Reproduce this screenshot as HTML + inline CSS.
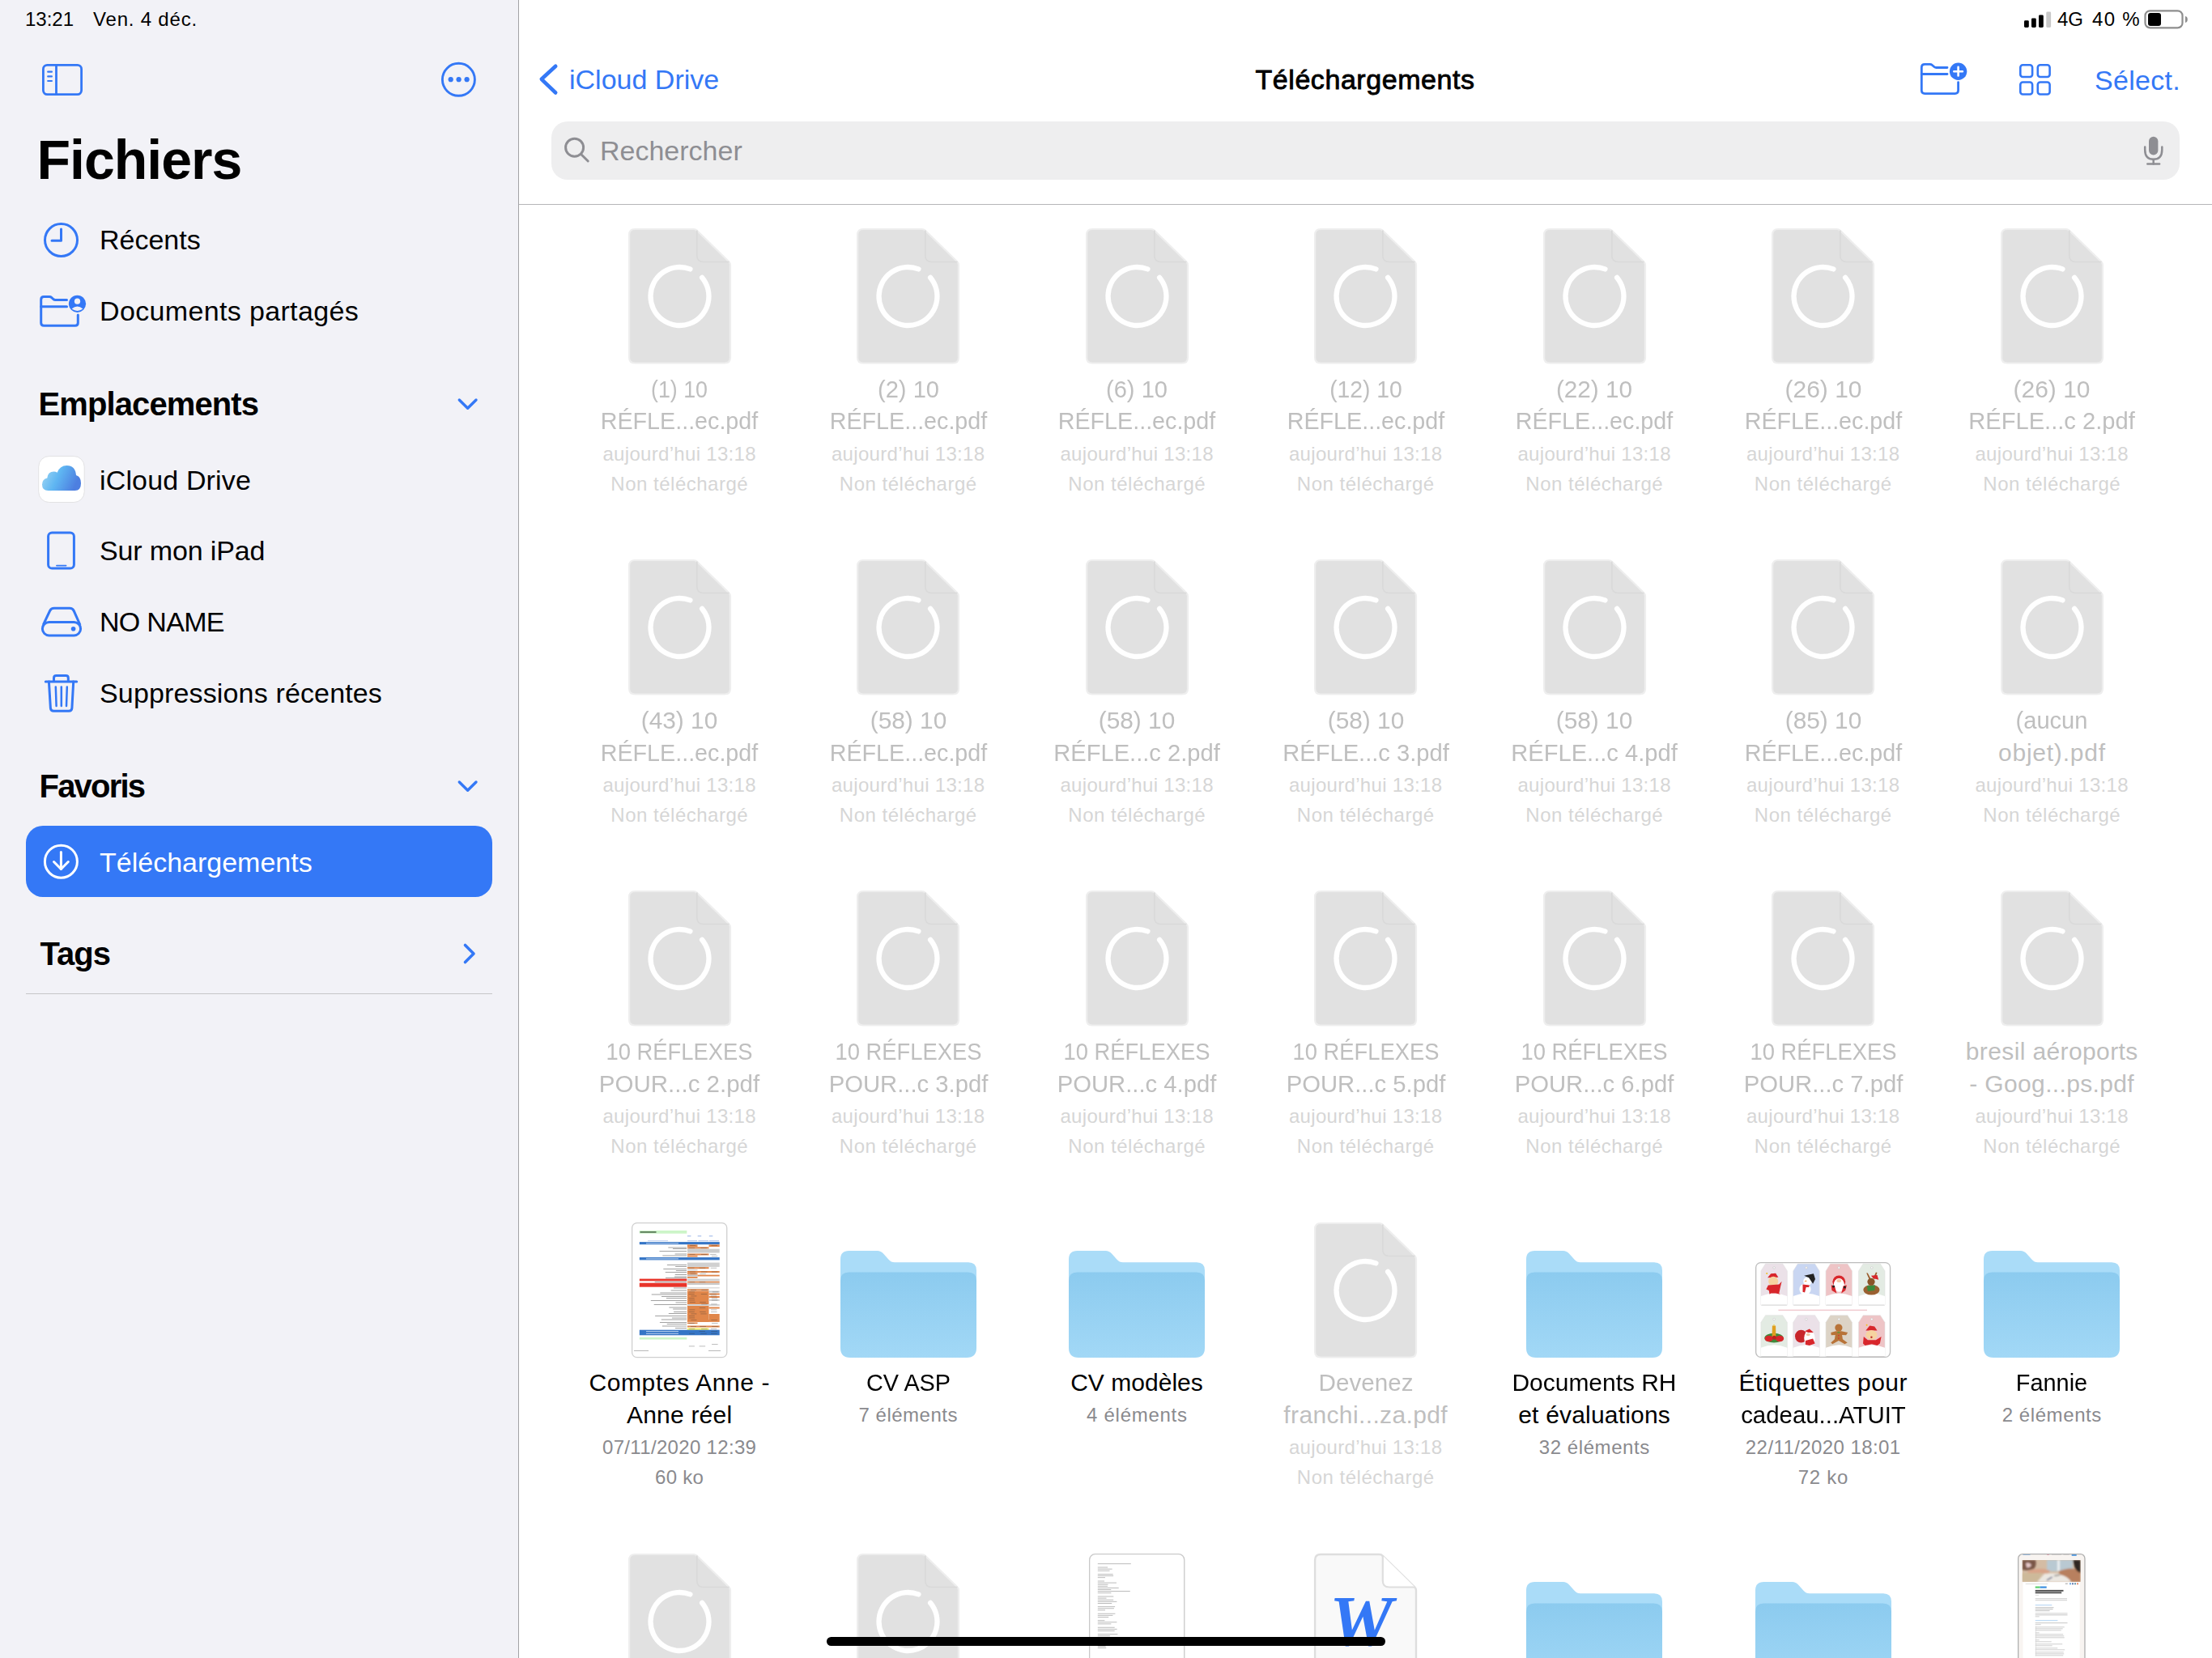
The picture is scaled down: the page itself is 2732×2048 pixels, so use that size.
<!DOCTYPE html><html><head><meta charset="utf-8"><style>
html,body{margin:0;padding:0;width:2732px;height:2048px;overflow:hidden;background:#fff;}
body{position:relative;font-family:"Liberation Sans",sans-serif;}
.t{position:absolute;white-space:nowrap;}
</style></head><body>
<div style="position:absolute;left:0;top:0;width:640px;height:2048px;background:#f2f2f7;"></div>
<div style="position:absolute;left:640px;top:0;width:1px;height:2048px;background:#a3a3a6;"></div>
<div style="position:absolute;left:641px;top:252px;width:2091px;height:1px;background:#b6b6b8;"></div>
<div class="t" style="left:31.00px;top:11.68px;font-size:24px;line-height:24px;color:#000;font-weight:400;">13:21</div>
<div class="t" style="left:115.00px;top:11.68px;font-size:24px;line-height:24px;color:#000;font-weight:400;letter-spacing:0.8px;">Ven. 4 déc.</div>
<svg style="position:absolute;left:2500px;top:14px;" width="34" height="20" viewBox="0 0 34 20"><rect x="0" y="11.2" width="5.8" height="8.8" rx="1.4" fill="#000"/><rect x="9" y="8.5" width="5.8" height="11.5" rx="1.4" fill="#000"/><rect x="18" y="4.5" width="5.8" height="15.5" rx="1.4" fill="#000"/><rect x="27.300000000000182" y="0.5" width="5.8" height="19.5" rx="1.4" fill="#c8c8c8"/></svg>
<div class="t" style="left:2541.00px;top:11.68px;font-size:24px;line-height:24px;color:#000;font-weight:400;">4G</div>
<div class="t" style="left:2584.00px;top:11.68px;font-size:24px;line-height:24px;color:#000;font-weight:400;letter-spacing:1.3px;">40 %</div>
<svg style="position:absolute;left:2648px;top:11px;" width="56" height="26" viewBox="0 0 56 26"><rect x="1.5" y="2.3" width="46" height="21.1" rx="6" fill="none" stroke="#8e8e8e" stroke-width="2.2"/><rect x="5" y="5" width="16" height="16" rx="3" fill="#000"/><path d="M51 9 Q53.8 9.6 53.8 13 Q53.8 16.4 51 17 Z" fill="#8e8e8e"/></svg>
<svg style="position:absolute;left:50px;top:77px;" width="56" height="44" viewBox="0 0 56 44"><g fill="none" stroke="#3478f6" stroke-width="2.8" stroke-linecap="round"><rect x="3.4" y="3.4" width="47.2" height="36.2" rx="5"/><line x1="19.5" y1="3.4" x2="19.5" y2="39.6"/><g stroke-width="2.2"><line x1="9.2" y1="11.7" x2="13.9" y2="11.7"/><line x1="9.2" y1="17.4" x2="13.9" y2="17.4"/><line x1="9.2" y1="23" x2="13.9" y2="23"/></g></g></svg>
<svg style="position:absolute;left:542px;top:74px;" width="50" height="50" viewBox="0 0 50 50"><circle cx="24.4" cy="24.3" r="20" fill="none" stroke="#3478f6" stroke-width="2.9"/><circle cx="14.7" cy="24.2" r="3.1" fill="#3478f6"/><circle cx="24.6" cy="24.2" r="3.1" fill="#3478f6"/><circle cx="34.6" cy="24.2" r="3.1" fill="#3478f6"/></svg>
<div class="t" style="left:45.50px;top:163.42px;font-size:68px;line-height:68px;color:#000;font-weight:700;letter-spacing:-1.0px;">Fichiers</div>
<svg style="position:absolute;left:50px;top:271px;" width="52" height="52" viewBox="0 0 52 52"><g fill="none" stroke="#3478f6" stroke-width="3" stroke-linecap="round" stroke-linejoin="round"><circle cx="25.5" cy="25.5" r="20"/><path d="M25.5 12 V26.3 H14"/></g></svg>
<div class="t" style="left:123.00px;top:279.21px;font-size:34px;line-height:34px;color:#000;font-weight:400;">Récents</div>
<svg style="position:absolute;left:46px;top:360px;" width="64" height="48" viewBox="0 0 64 48"><g fill="none" stroke="#3478f6" stroke-width="3" stroke-linecap="round" stroke-linejoin="round"><path d="M36.5 10.5 H22.5 Q21 10.5 19.8 9.5 L17.8 7.7 Q16.6 6.6 15 6.6 H8.2 Q4.7 6.6 4.7 10.2 V38.7 Q4.7 42.3 8.2 42.3 H46.8 Q50.3 42.3 50.3 38.7 V29"/><path d="M4.7 18.7 H36.5"/></g><circle cx="49.5" cy="15.3" r="10.6" fill="#3478f6"/><circle cx="49.5" cy="12.2" r="3.6" fill="#f2f2f7"/><path d="M42.6 21.6 Q49.5 15.5 56.4 21.6 Q49.5 26.5 42.6 21.6 Z" fill="#f2f2f7"/></svg>
<div class="t" style="left:123.00px;top:367.01px;font-size:34px;line-height:34px;color:#000;font-weight:400;letter-spacing:0.35px;">Documents partagés</div>
<div class="t" style="left:47.50px;top:478.53px;font-size:40px;line-height:40px;color:#000;font-weight:700;letter-spacing:-0.9px;">Emplacements</div>
<svg style="position:absolute;left:560px;top:486px;" width="36" height="26" viewBox="0 0 36 26"><path d="M7.3 8 L17.65 18.2 L28 8" fill="none" stroke="#3478f6" stroke-width="3.4" stroke-linecap="round" stroke-linejoin="round"/></svg>
<svg style="position:absolute;left:46px;top:562px;" width="60" height="60" viewBox="0 0 60 60"><defs><linearGradient id="cg" x1="0" y1="0" x2="1" y2="0.3"><stop offset="0" stop-color="#a6daf3"/><stop offset="0.5" stop-color="#5fb6f2"/><stop offset="1" stop-color="#4d7fe0"/></linearGradient></defs><rect x="1.7" y="1.5" width="56.5" height="57" rx="13" fill="#fff" stroke="#e2e2e4" stroke-width="1"/><path d="M13.5 44 Q6 44 6 36.5 Q6 30 12.3 28.6 Q13 20.5 20.5 20.5 Q23 20.5 24.6 21.7 Q28 13 36.5 13 Q47 13 48 25 Q54 26.5 54 35 Q54 44 46.5 44 Z" fill="url(#cg)"/></svg>
<div class="t" style="left:123.00px;top:575.91px;font-size:34px;line-height:34px;color:#000;font-weight:400;letter-spacing:0.15px;">iCloud Drive</div>
<svg style="position:absolute;left:56px;top:654px;" width="40" height="52" viewBox="0 0 40 52"><g fill="none" stroke="#3478f6" stroke-width="3" stroke-linecap="round"><rect x="3.6" y="3.9" width="31.8" height="44.2" rx="4.6"/><line x1="14" y1="44.6" x2="25.5" y2="44.6" stroke-width="1.9"/></g></svg>
<div class="t" style="left:123.00px;top:663.21px;font-size:34px;line-height:34px;color:#000;font-weight:400;letter-spacing:-0.15px;">Sur mon iPad</div>
<svg style="position:absolute;left:48px;top:746px;" width="58" height="44" viewBox="0 0 58 44"><g fill="none" stroke="#3478f6" stroke-width="3" stroke-linejoin="round"><path d="M5.3 26 L13.6 8.5 Q15.1 5.3 18.8 5.3 H38 Q41.7 5.3 43.2 8.5 L51 26"/><rect x="4.4" y="22.5" width="47.2" height="16.4" rx="8.2"/></g><circle cx="42.6" cy="30.7" r="2.8" fill="#3478f6"/></svg>
<div class="t" style="left:123.00px;top:751.21px;font-size:34px;line-height:34px;color:#000;font-weight:400;letter-spacing:-0.7px;">NO NAME</div>
<svg style="position:absolute;left:52px;top:830px;" width="48" height="52" viewBox="0 0 48 52"><g fill="none" stroke="#3478f6" stroke-width="3" stroke-linecap="round" stroke-linejoin="round"><path d="M4.3 12 H42.7"/><path d="M14.5 11.5 V7.5 Q14.5 4.6 17.6 4.6 H29.3 Q32.3 4.6 32.3 7.5 V11.5"/><path d="M8.4 12 L10.4 44.6 Q10.7 48.2 14.3 48.2 H33 Q36.6 48.2 36.9 44.6 L38.7 12"/><path d="M16.8 18.5 L17.6 42" stroke-width="2.5"/><path d="M23.8 18.5 V42" stroke-width="2.5"/><path d="M30.8 18.5 L30 42" stroke-width="2.5"/></g></svg>
<div class="t" style="left:123.00px;top:838.71px;font-size:34px;line-height:34px;color:#000;font-weight:400;letter-spacing:0.15px;">Suppressions récentes</div>
<div class="t" style="left:48.50px;top:951.33px;font-size:40px;line-height:40px;color:#000;font-weight:700;letter-spacing:-1.8px;">Favoris</div>
<svg style="position:absolute;left:560px;top:958px;" width="36" height="26" viewBox="0 0 36 26"><path d="M7.3 8 L17.65 18.2 L28 8" fill="none" stroke="#3478f6" stroke-width="3.4" stroke-linecap="round" stroke-linejoin="round"/></svg>
<div style="position:absolute;left:32px;top:1020px;width:576px;height:88px;border-radius:21px;background:#3478f6;"></div>
<svg style="position:absolute;left:50px;top:1039px;" width="52" height="52" viewBox="0 0 52 52"><g fill="none" stroke="#fff" stroke-width="3" stroke-linecap="round" stroke-linejoin="round"><circle cx="25.4" cy="25.2" r="20"/><path d="M25.4 13.5 V34.5"/><path d="M16.5 25.5 L25.4 34.5 L34.3 25.5"/></g></svg>
<div class="t" style="left:123.00px;top:1047.51px;font-size:34px;line-height:34px;color:#fff;font-weight:400;">Téléchargements</div>
<div class="t" style="left:49.50px;top:1157.83px;font-size:40px;line-height:40px;color:#000;font-weight:700;letter-spacing:-1.0px;">Tags</div>
<svg style="position:absolute;left:566px;top:1160px;" width="28" height="36" viewBox="0 0 28 36"><path d="M8.5 7.5 L19 18 L8.5 28.5" fill="none" stroke="#3478f6" stroke-width="3.6" stroke-linecap="round" stroke-linejoin="round"/></svg>
<div style="position:absolute;left:32px;top:1227px;width:576px;height:1px;background:#c6c6c8;"></div>
<svg style="position:absolute;left:660px;top:76px;" width="34" height="46" viewBox="0 0 34 46"><path d="M26.2 5.7 L8.8 21.8 L26.2 38.5" fill="none" stroke="#3478f6" stroke-width="4.6" stroke-linecap="round" stroke-linejoin="round"/></svg>
<div class="t" style="left:703.00px;top:81.21px;font-size:34px;line-height:34px;color:#3478f6;font-weight:400;">iCloud Drive</div>
<div class="t" style="left:1386.00px;width:600px;text-align:center;top:81.41px;font-size:34px;line-height:34px;color:#000;font-weight:400;letter-spacing:0.55px;-webkit-text-stroke:0.85px #000;">Téléchargements</div>
<svg style="position:absolute;left:2368px;top:72px;" width="64" height="50" viewBox="0 0 64 50"><g fill="none" stroke="#3478f6" stroke-width="2.8" stroke-linecap="round" stroke-linejoin="round"><path d="M37 11.5 H23.5 Q22 11.5 20.8 10.5 L18.5 8.5 Q17.3 7.4 15.5 7.4 H9.3 Q5.3 7.4 5.3 11.4 V39.6 Q5.3 43.6 9.3 43.6 H46.6 Q50.6 43.6 50.6 39.6 V29.6"/><path d="M5.3 19.5 H37"/></g><circle cx="50.6" cy="16.2" r="10.7" fill="#3478f6"/><path d="M50.6 10.9 V21.5 M45.3 16.2 H55.9" stroke="#fff" stroke-width="2.6" stroke-linecap="round"/></svg>
<svg style="position:absolute;left:2490px;top:75px;" width="48" height="48" viewBox="0 0 48 48"><g fill="none" stroke="#3478f6" stroke-width="2.6"><rect x="5.3" y="5.3" width="14.8" height="14.7" rx="3"/><rect x="26.8" y="5.3" width="14.8" height="14.7" rx="3"/><rect x="5.3" y="26.5" width="14.8" height="15" rx="3"/><rect x="26.8" y="26.5" width="14.8" height="15" rx="3"/></g></svg>
<div class="t" style="left:2587.00px;top:81.81px;font-size:34px;line-height:34px;color:#3478f6;font-weight:400;letter-spacing:0.3px;">Sélect.</div>
<div style="position:absolute;left:681px;top:150px;width:2011px;height:72px;border-radius:20px;background:#eeeeef;"></div>
<svg style="position:absolute;left:692px;top:164px;" width="40" height="42" viewBox="0 0 40 42"><g fill="none" stroke="#8e8e93" stroke-width="3" stroke-linecap="round"><circle cx="17.6" cy="18.2" r="11"/><path d="M25.6 26.5 L34.2 35"/></g></svg>
<div class="t" style="left:741.00px;top:169.21px;font-size:34px;line-height:34px;color:#8e8e93;font-weight:400;">Rechercher</div>
<svg style="position:absolute;left:2644px;top:164px;" width="32" height="44" viewBox="0 0 32 44"><rect x="10" y="4.8" width="11.4" height="22.7" rx="5.7" fill="#8e8e93"/><g fill="none" stroke="#8e8e93" stroke-width="2.5" stroke-linecap="round"><path d="M5.2 17.5 V21 Q5.2 32.8 15.7 32.8 Q26.3 32.8 26.3 21 V17.5"/><path d="M15.7 33 V38.5"/><path d="M8.3 38.6 H23.1"/></g></svg>
<svg style="position:absolute;left:773.5px;top:280.0px;" width="131" height="172" viewBox="0 0 131 172"><path d="M10.3 3 H82.5 Q85 3 86.8 4.8 L126.2 43.3 Q128 45.1 128 47.6 V161.5 Q128 168.5 121 168.5 H10.1 Q3.1 168.5 3.1 161.5 V10 Q3.1 3 10.3 3 Z" fill="#e1e1e1" stroke="#eeeeee" stroke-width="2.2"/><path d="M86.8 4.5 V35.5 Q86.8 43.5 94.8 43.5 H126.5" fill="none" stroke="#d9d9d9" stroke-width="1.6"/><path d="M93.08 62.86 A 36 36 0 1 1 78.40 52.39" fill="none" stroke="#fff" stroke-width="6.3" stroke-linecap="round"/></svg>
<div class="t" style="left:689.00px;width:300px;text-align:center;top:465.60px;font-size:30px;line-height:30px;color:#bfbfbf;font-weight:400;transform:scaleX(0.8923);transform-origin:50% 50%;">(1) 10</div>
<div class="t" style="left:689.00px;width:300px;text-align:center;top:505.40px;font-size:30px;line-height:30px;color:#bfbfbf;font-weight:400;transform:scaleX(0.9559);transform-origin:50% 50%;">RÉFLE...ec.pdf</div>
<div class="t" style="left:689.16px;width:300px;text-align:center;top:548.58px;font-size:24px;line-height:24px;color:#d6d6d6;font-weight:400;letter-spacing:0.312px;">aujourd’hui 13:18</div>
<div class="t" style="left:689.25px;width:300px;text-align:center;top:585.68px;font-size:24px;line-height:24px;color:#d6d6d6;font-weight:400;letter-spacing:0.508px;">Non téléchargé</div>
<svg style="position:absolute;left:1056.0px;top:280.0px;" width="131" height="172" viewBox="0 0 131 172"><path d="M10.3 3 H82.5 Q85 3 86.8 4.8 L126.2 43.3 Q128 45.1 128 47.6 V161.5 Q128 168.5 121 168.5 H10.1 Q3.1 168.5 3.1 161.5 V10 Q3.1 3 10.3 3 Z" fill="#e1e1e1" stroke="#eeeeee" stroke-width="2.2"/><path d="M86.8 4.5 V35.5 Q86.8 43.5 94.8 43.5 H126.5" fill="none" stroke="#d9d9d9" stroke-width="1.6"/><path d="M93.08 62.86 A 36 36 0 1 1 78.40 52.39" fill="none" stroke="#fff" stroke-width="6.3" stroke-linecap="round"/></svg>
<div class="t" style="left:971.50px;width:300px;text-align:center;top:465.60px;font-size:30px;line-height:30px;color:#bfbfbf;font-weight:400;transform:scaleX(0.9692);transform-origin:50% 50%;">(2) 10</div>
<div class="t" style="left:971.50px;width:300px;text-align:center;top:505.40px;font-size:30px;line-height:30px;color:#bfbfbf;font-weight:400;transform:scaleX(0.9559);transform-origin:50% 50%;">RÉFLE...ec.pdf</div>
<div class="t" style="left:971.66px;width:300px;text-align:center;top:548.58px;font-size:24px;line-height:24px;color:#d6d6d6;font-weight:400;letter-spacing:0.312px;">aujourd’hui 13:18</div>
<div class="t" style="left:971.75px;width:300px;text-align:center;top:585.68px;font-size:24px;line-height:24px;color:#d6d6d6;font-weight:400;letter-spacing:0.508px;">Non téléchargé</div>
<svg style="position:absolute;left:1338.5px;top:280.0px;" width="131" height="172" viewBox="0 0 131 172"><path d="M10.3 3 H82.5 Q85 3 86.8 4.8 L126.2 43.3 Q128 45.1 128 47.6 V161.5 Q128 168.5 121 168.5 H10.1 Q3.1 168.5 3.1 161.5 V10 Q3.1 3 10.3 3 Z" fill="#e1e1e1" stroke="#eeeeee" stroke-width="2.2"/><path d="M86.8 4.5 V35.5 Q86.8 43.5 94.8 43.5 H126.5" fill="none" stroke="#d9d9d9" stroke-width="1.6"/><path d="M93.08 62.86 A 36 36 0 1 1 78.40 52.39" fill="none" stroke="#fff" stroke-width="6.3" stroke-linecap="round"/></svg>
<div class="t" style="left:1254.00px;width:300px;text-align:center;top:465.60px;font-size:30px;line-height:30px;color:#bfbfbf;font-weight:400;transform:scaleX(0.9692);transform-origin:50% 50%;">(6) 10</div>
<div class="t" style="left:1254.00px;width:300px;text-align:center;top:505.40px;font-size:30px;line-height:30px;color:#bfbfbf;font-weight:400;transform:scaleX(0.9559);transform-origin:50% 50%;">RÉFLE...ec.pdf</div>
<div class="t" style="left:1254.16px;width:300px;text-align:center;top:548.58px;font-size:24px;line-height:24px;color:#d6d6d6;font-weight:400;letter-spacing:0.312px;">aujourd’hui 13:18</div>
<div class="t" style="left:1254.25px;width:300px;text-align:center;top:585.68px;font-size:24px;line-height:24px;color:#d6d6d6;font-weight:400;letter-spacing:0.508px;">Non téléchargé</div>
<svg style="position:absolute;left:1621.0px;top:280.0px;" width="131" height="172" viewBox="0 0 131 172"><path d="M10.3 3 H82.5 Q85 3 86.8 4.8 L126.2 43.3 Q128 45.1 128 47.6 V161.5 Q128 168.5 121 168.5 H10.1 Q3.1 168.5 3.1 161.5 V10 Q3.1 3 10.3 3 Z" fill="#e1e1e1" stroke="#eeeeee" stroke-width="2.2"/><path d="M86.8 4.5 V35.5 Q86.8 43.5 94.8 43.5 H126.5" fill="none" stroke="#d9d9d9" stroke-width="1.6"/><path d="M93.08 62.86 A 36 36 0 1 1 78.40 52.39" fill="none" stroke="#fff" stroke-width="6.3" stroke-linecap="round"/></svg>
<div class="t" style="left:1536.50px;width:300px;text-align:center;top:465.60px;font-size:30px;line-height:30px;color:#bfbfbf;font-weight:400;transform:scaleX(0.9432);transform-origin:50% 50%;">(12) 10</div>
<div class="t" style="left:1536.50px;width:300px;text-align:center;top:505.40px;font-size:30px;line-height:30px;color:#bfbfbf;font-weight:400;transform:scaleX(0.9559);transform-origin:50% 50%;">RÉFLE...ec.pdf</div>
<div class="t" style="left:1536.66px;width:300px;text-align:center;top:548.58px;font-size:24px;line-height:24px;color:#d6d6d6;font-weight:400;letter-spacing:0.312px;">aujourd’hui 13:18</div>
<div class="t" style="left:1536.75px;width:300px;text-align:center;top:585.68px;font-size:24px;line-height:24px;color:#d6d6d6;font-weight:400;letter-spacing:0.508px;">Non téléchargé</div>
<svg style="position:absolute;left:1903.5px;top:280.0px;" width="131" height="172" viewBox="0 0 131 172"><path d="M10.3 3 H82.5 Q85 3 86.8 4.8 L126.2 43.3 Q128 45.1 128 47.6 V161.5 Q128 168.5 121 168.5 H10.1 Q3.1 168.5 3.1 161.5 V10 Q3.1 3 10.3 3 Z" fill="#e1e1e1" stroke="#eeeeee" stroke-width="2.2"/><path d="M86.8 4.5 V35.5 Q86.8 43.5 94.8 43.5 H126.5" fill="none" stroke="#d9d9d9" stroke-width="1.6"/><path d="M93.08 62.86 A 36 36 0 1 1 78.40 52.39" fill="none" stroke="#fff" stroke-width="6.3" stroke-linecap="round"/></svg>
<div class="t" style="left:1819.00px;width:300px;text-align:center;top:465.60px;font-size:30px;line-height:30px;color:#bfbfbf;font-weight:400;transform:scaleX(0.9895);transform-origin:50% 50%;">(22) 10</div>
<div class="t" style="left:1819.00px;width:300px;text-align:center;top:505.40px;font-size:30px;line-height:30px;color:#bfbfbf;font-weight:400;transform:scaleX(0.9559);transform-origin:50% 50%;">RÉFLE...ec.pdf</div>
<div class="t" style="left:1819.16px;width:300px;text-align:center;top:548.58px;font-size:24px;line-height:24px;color:#d6d6d6;font-weight:400;letter-spacing:0.312px;">aujourd’hui 13:18</div>
<div class="t" style="left:1819.25px;width:300px;text-align:center;top:585.68px;font-size:24px;line-height:24px;color:#d6d6d6;font-weight:400;letter-spacing:0.508px;">Non téléchargé</div>
<svg style="position:absolute;left:2186.0px;top:280.0px;" width="131" height="172" viewBox="0 0 131 172"><path d="M10.3 3 H82.5 Q85 3 86.8 4.8 L126.2 43.3 Q128 45.1 128 47.6 V161.5 Q128 168.5 121 168.5 H10.1 Q3.1 168.5 3.1 161.5 V10 Q3.1 3 10.3 3 Z" fill="#e1e1e1" stroke="#eeeeee" stroke-width="2.2"/><path d="M86.8 4.5 V35.5 Q86.8 43.5 94.8 43.5 H126.5" fill="none" stroke="#d9d9d9" stroke-width="1.6"/><path d="M93.08 62.86 A 36 36 0 1 1 78.40 52.39" fill="none" stroke="#fff" stroke-width="6.3" stroke-linecap="round"/></svg>
<div class="t" style="left:2101.50px;width:300px;text-align:center;top:465.60px;font-size:30px;line-height:30px;color:#bfbfbf;font-weight:400;transform:scaleX(0.9989);transform-origin:50% 50%;">(26) 10</div>
<div class="t" style="left:2101.50px;width:300px;text-align:center;top:505.40px;font-size:30px;line-height:30px;color:#bfbfbf;font-weight:400;transform:scaleX(0.9559);transform-origin:50% 50%;">RÉFLE...ec.pdf</div>
<div class="t" style="left:2101.66px;width:300px;text-align:center;top:548.58px;font-size:24px;line-height:24px;color:#d6d6d6;font-weight:400;letter-spacing:0.312px;">aujourd’hui 13:18</div>
<div class="t" style="left:2101.75px;width:300px;text-align:center;top:585.68px;font-size:24px;line-height:24px;color:#d6d6d6;font-weight:400;letter-spacing:0.508px;">Non téléchargé</div>
<svg style="position:absolute;left:2468.5px;top:280.0px;" width="131" height="172" viewBox="0 0 131 172"><path d="M10.3 3 H82.5 Q85 3 86.8 4.8 L126.2 43.3 Q128 45.1 128 47.6 V161.5 Q128 168.5 121 168.5 H10.1 Q3.1 168.5 3.1 161.5 V10 Q3.1 3 10.3 3 Z" fill="#e1e1e1" stroke="#eeeeee" stroke-width="2.2"/><path d="M86.8 4.5 V35.5 Q86.8 43.5 94.8 43.5 H126.5" fill="none" stroke="#d9d9d9" stroke-width="1.6"/><path d="M93.08 62.86 A 36 36 0 1 1 78.40 52.39" fill="none" stroke="#fff" stroke-width="6.3" stroke-linecap="round"/></svg>
<div class="t" style="left:2384.00px;width:300px;text-align:center;top:465.60px;font-size:30px;line-height:30px;color:#bfbfbf;font-weight:400;transform:scaleX(0.9989);transform-origin:50% 50%;">(26) 10</div>
<div class="t" style="left:2384.00px;width:300px;text-align:center;top:505.40px;font-size:30px;line-height:30px;color:#bfbfbf;font-weight:400;transform:scaleX(0.9710);transform-origin:50% 50%;">RÉFLE...c 2.pdf</div>
<div class="t" style="left:2384.16px;width:300px;text-align:center;top:548.58px;font-size:24px;line-height:24px;color:#d6d6d6;font-weight:400;letter-spacing:0.312px;">aujourd’hui 13:18</div>
<div class="t" style="left:2384.25px;width:300px;text-align:center;top:585.68px;font-size:24px;line-height:24px;color:#d6d6d6;font-weight:400;letter-spacing:0.508px;">Non téléchargé</div>
<svg style="position:absolute;left:773.5px;top:689.2px;" width="131" height="172" viewBox="0 0 131 172"><path d="M10.3 3 H82.5 Q85 3 86.8 4.8 L126.2 43.3 Q128 45.1 128 47.6 V161.5 Q128 168.5 121 168.5 H10.1 Q3.1 168.5 3.1 161.5 V10 Q3.1 3 10.3 3 Z" fill="#e1e1e1" stroke="#eeeeee" stroke-width="2.2"/><path d="M86.8 4.5 V35.5 Q86.8 43.5 94.8 43.5 H126.5" fill="none" stroke="#d9d9d9" stroke-width="1.6"/><path d="M93.08 62.86 A 36 36 0 1 1 78.40 52.39" fill="none" stroke="#fff" stroke-width="6.3" stroke-linecap="round"/></svg>
<div class="t" style="left:689.00px;width:300px;text-align:center;top:874.80px;font-size:30px;line-height:30px;color:#bfbfbf;font-weight:400;transform:scaleX(0.9947);transform-origin:50% 50%;">(43) 10</div>
<div class="t" style="left:689.00px;width:300px;text-align:center;top:914.60px;font-size:30px;line-height:30px;color:#bfbfbf;font-weight:400;transform:scaleX(0.9559);transform-origin:50% 50%;">RÉFLE...ec.pdf</div>
<div class="t" style="left:689.16px;width:300px;text-align:center;top:957.78px;font-size:24px;line-height:24px;color:#d6d6d6;font-weight:400;letter-spacing:0.312px;">aujourd’hui 13:18</div>
<div class="t" style="left:689.25px;width:300px;text-align:center;top:994.88px;font-size:24px;line-height:24px;color:#d6d6d6;font-weight:400;letter-spacing:0.508px;">Non téléchargé</div>
<svg style="position:absolute;left:1056.0px;top:689.2px;" width="131" height="172" viewBox="0 0 131 172"><path d="M10.3 3 H82.5 Q85 3 86.8 4.8 L126.2 43.3 Q128 45.1 128 47.6 V161.5 Q128 168.5 121 168.5 H10.1 Q3.1 168.5 3.1 161.5 V10 Q3.1 3 10.3 3 Z" fill="#e1e1e1" stroke="#eeeeee" stroke-width="2.2"/><path d="M86.8 4.5 V35.5 Q86.8 43.5 94.8 43.5 H126.5" fill="none" stroke="#d9d9d9" stroke-width="1.6"/><path d="M93.08 62.86 A 36 36 0 1 1 78.40 52.39" fill="none" stroke="#fff" stroke-width="6.3" stroke-linecap="round"/></svg>
<div class="t" style="left:971.50px;width:300px;text-align:center;top:874.80px;font-size:30px;line-height:30px;color:#bfbfbf;font-weight:400;transform:scaleX(0.9937);transform-origin:50% 50%;">(58) 10</div>
<div class="t" style="left:971.50px;width:300px;text-align:center;top:914.60px;font-size:30px;line-height:30px;color:#bfbfbf;font-weight:400;transform:scaleX(0.9559);transform-origin:50% 50%;">RÉFLE...ec.pdf</div>
<div class="t" style="left:971.66px;width:300px;text-align:center;top:957.78px;font-size:24px;line-height:24px;color:#d6d6d6;font-weight:400;letter-spacing:0.312px;">aujourd’hui 13:18</div>
<div class="t" style="left:971.75px;width:300px;text-align:center;top:994.88px;font-size:24px;line-height:24px;color:#d6d6d6;font-weight:400;letter-spacing:0.508px;">Non téléchargé</div>
<svg style="position:absolute;left:1338.5px;top:689.2px;" width="131" height="172" viewBox="0 0 131 172"><path d="M10.3 3 H82.5 Q85 3 86.8 4.8 L126.2 43.3 Q128 45.1 128 47.6 V161.5 Q128 168.5 121 168.5 H10.1 Q3.1 168.5 3.1 161.5 V10 Q3.1 3 10.3 3 Z" fill="#e1e1e1" stroke="#eeeeee" stroke-width="2.2"/><path d="M86.8 4.5 V35.5 Q86.8 43.5 94.8 43.5 H126.5" fill="none" stroke="#d9d9d9" stroke-width="1.6"/><path d="M93.08 62.86 A 36 36 0 1 1 78.40 52.39" fill="none" stroke="#fff" stroke-width="6.3" stroke-linecap="round"/></svg>
<div class="t" style="left:1254.00px;width:300px;text-align:center;top:874.80px;font-size:30px;line-height:30px;color:#bfbfbf;font-weight:400;transform:scaleX(0.9937);transform-origin:50% 50%;">(58) 10</div>
<div class="t" style="left:1254.00px;width:300px;text-align:center;top:914.60px;font-size:30px;line-height:30px;color:#bfbfbf;font-weight:400;transform:scaleX(0.9710);transform-origin:50% 50%;">RÉFLE...c 2.pdf</div>
<div class="t" style="left:1254.16px;width:300px;text-align:center;top:957.78px;font-size:24px;line-height:24px;color:#d6d6d6;font-weight:400;letter-spacing:0.312px;">aujourd’hui 13:18</div>
<div class="t" style="left:1254.25px;width:300px;text-align:center;top:994.88px;font-size:24px;line-height:24px;color:#d6d6d6;font-weight:400;letter-spacing:0.508px;">Non téléchargé</div>
<svg style="position:absolute;left:1621.0px;top:689.2px;" width="131" height="172" viewBox="0 0 131 172"><path d="M10.3 3 H82.5 Q85 3 86.8 4.8 L126.2 43.3 Q128 45.1 128 47.6 V161.5 Q128 168.5 121 168.5 H10.1 Q3.1 168.5 3.1 161.5 V10 Q3.1 3 10.3 3 Z" fill="#e1e1e1" stroke="#eeeeee" stroke-width="2.2"/><path d="M86.8 4.5 V35.5 Q86.8 43.5 94.8 43.5 H126.5" fill="none" stroke="#d9d9d9" stroke-width="1.6"/><path d="M93.08 62.86 A 36 36 0 1 1 78.40 52.39" fill="none" stroke="#fff" stroke-width="6.3" stroke-linecap="round"/></svg>
<div class="t" style="left:1536.50px;width:300px;text-align:center;top:874.80px;font-size:30px;line-height:30px;color:#bfbfbf;font-weight:400;transform:scaleX(0.9937);transform-origin:50% 50%;">(58) 10</div>
<div class="t" style="left:1536.50px;width:300px;text-align:center;top:914.60px;font-size:30px;line-height:30px;color:#bfbfbf;font-weight:400;transform:scaleX(0.9710);transform-origin:50% 50%;">RÉFLE...c 3.pdf</div>
<div class="t" style="left:1536.66px;width:300px;text-align:center;top:957.78px;font-size:24px;line-height:24px;color:#d6d6d6;font-weight:400;letter-spacing:0.312px;">aujourd’hui 13:18</div>
<div class="t" style="left:1536.75px;width:300px;text-align:center;top:994.88px;font-size:24px;line-height:24px;color:#d6d6d6;font-weight:400;letter-spacing:0.508px;">Non téléchargé</div>
<svg style="position:absolute;left:1903.5px;top:689.2px;" width="131" height="172" viewBox="0 0 131 172"><path d="M10.3 3 H82.5 Q85 3 86.8 4.8 L126.2 43.3 Q128 45.1 128 47.6 V161.5 Q128 168.5 121 168.5 H10.1 Q3.1 168.5 3.1 161.5 V10 Q3.1 3 10.3 3 Z" fill="#e1e1e1" stroke="#eeeeee" stroke-width="2.2"/><path d="M86.8 4.5 V35.5 Q86.8 43.5 94.8 43.5 H126.5" fill="none" stroke="#d9d9d9" stroke-width="1.6"/><path d="M93.08 62.86 A 36 36 0 1 1 78.40 52.39" fill="none" stroke="#fff" stroke-width="6.3" stroke-linecap="round"/></svg>
<div class="t" style="left:1819.00px;width:300px;text-align:center;top:874.80px;font-size:30px;line-height:30px;color:#bfbfbf;font-weight:400;transform:scaleX(0.9937);transform-origin:50% 50%;">(58) 10</div>
<div class="t" style="left:1819.00px;width:300px;text-align:center;top:914.60px;font-size:30px;line-height:30px;color:#bfbfbf;font-weight:400;transform:scaleX(0.9710);transform-origin:50% 50%;">RÉFLE...c 4.pdf</div>
<div class="t" style="left:1819.16px;width:300px;text-align:center;top:957.78px;font-size:24px;line-height:24px;color:#d6d6d6;font-weight:400;letter-spacing:0.312px;">aujourd’hui 13:18</div>
<div class="t" style="left:1819.25px;width:300px;text-align:center;top:994.88px;font-size:24px;line-height:24px;color:#d6d6d6;font-weight:400;letter-spacing:0.508px;">Non téléchargé</div>
<svg style="position:absolute;left:2186.0px;top:689.2px;" width="131" height="172" viewBox="0 0 131 172"><path d="M10.3 3 H82.5 Q85 3 86.8 4.8 L126.2 43.3 Q128 45.1 128 47.6 V161.5 Q128 168.5 121 168.5 H10.1 Q3.1 168.5 3.1 161.5 V10 Q3.1 3 10.3 3 Z" fill="#e1e1e1" stroke="#eeeeee" stroke-width="2.2"/><path d="M86.8 4.5 V35.5 Q86.8 43.5 94.8 43.5 H126.5" fill="none" stroke="#d9d9d9" stroke-width="1.6"/><path d="M93.08 62.86 A 36 36 0 1 1 78.40 52.39" fill="none" stroke="#fff" stroke-width="6.3" stroke-linecap="round"/></svg>
<div class="t" style="left:2101.50px;width:300px;text-align:center;top:874.80px;font-size:30px;line-height:30px;color:#bfbfbf;font-weight:400;transform:scaleX(0.9937);transform-origin:50% 50%;">(85) 10</div>
<div class="t" style="left:2101.50px;width:300px;text-align:center;top:914.60px;font-size:30px;line-height:30px;color:#bfbfbf;font-weight:400;transform:scaleX(0.9559);transform-origin:50% 50%;">RÉFLE...ec.pdf</div>
<div class="t" style="left:2101.66px;width:300px;text-align:center;top:957.78px;font-size:24px;line-height:24px;color:#d6d6d6;font-weight:400;letter-spacing:0.312px;">aujourd’hui 13:18</div>
<div class="t" style="left:2101.75px;width:300px;text-align:center;top:994.88px;font-size:24px;line-height:24px;color:#d6d6d6;font-weight:400;letter-spacing:0.508px;">Non téléchargé</div>
<svg style="position:absolute;left:2468.5px;top:689.2px;" width="131" height="172" viewBox="0 0 131 172"><path d="M10.3 3 H82.5 Q85 3 86.8 4.8 L126.2 43.3 Q128 45.1 128 47.6 V161.5 Q128 168.5 121 168.5 H10.1 Q3.1 168.5 3.1 161.5 V10 Q3.1 3 10.3 3 Z" fill="#e1e1e1" stroke="#eeeeee" stroke-width="2.2"/><path d="M86.8 4.5 V35.5 Q86.8 43.5 94.8 43.5 H126.5" fill="none" stroke="#d9d9d9" stroke-width="1.6"/><path d="M93.08 62.86 A 36 36 0 1 1 78.40 52.39" fill="none" stroke="#fff" stroke-width="6.3" stroke-linecap="round"/></svg>
<div class="t" style="left:2384.00px;width:300px;text-align:center;top:874.80px;font-size:30px;line-height:30px;color:#bfbfbf;font-weight:400;transform:scaleX(0.9696);transform-origin:50% 50%;">(aucun</div>
<div class="t" style="left:2384.38px;width:300px;text-align:center;top:914.60px;font-size:30px;line-height:30px;color:#bfbfbf;font-weight:400;letter-spacing:0.767px;">objet).pdf</div>
<div class="t" style="left:2384.16px;width:300px;text-align:center;top:957.78px;font-size:24px;line-height:24px;color:#d6d6d6;font-weight:400;letter-spacing:0.312px;">aujourd’hui 13:18</div>
<div class="t" style="left:2384.25px;width:300px;text-align:center;top:994.88px;font-size:24px;line-height:24px;color:#d6d6d6;font-weight:400;letter-spacing:0.508px;">Non téléchargé</div>
<svg style="position:absolute;left:773.5px;top:1098.4px;" width="131" height="172" viewBox="0 0 131 172"><path d="M10.3 3 H82.5 Q85 3 86.8 4.8 L126.2 43.3 Q128 45.1 128 47.6 V161.5 Q128 168.5 121 168.5 H10.1 Q3.1 168.5 3.1 161.5 V10 Q3.1 3 10.3 3 Z" fill="#e1e1e1" stroke="#eeeeee" stroke-width="2.2"/><path d="M86.8 4.5 V35.5 Q86.8 43.5 94.8 43.5 H126.5" fill="none" stroke="#d9d9d9" stroke-width="1.6"/><path d="M93.08 62.86 A 36 36 0 1 1 78.40 52.39" fill="none" stroke="#fff" stroke-width="6.3" stroke-linecap="round"/></svg>
<div class="t" style="left:689.00px;width:300px;text-align:center;top:1284.00px;font-size:30px;line-height:30px;color:#bfbfbf;font-weight:400;transform:scaleX(0.9111);transform-origin:50% 50%;">10 RÉFLEXES</div>
<div class="t" style="left:689.00px;width:300px;text-align:center;top:1323.80px;font-size:30px;line-height:30px;color:#bfbfbf;font-weight:400;transform:scaleX(0.9837);transform-origin:50% 50%;">POUR...c 2.pdf</div>
<div class="t" style="left:689.16px;width:300px;text-align:center;top:1366.98px;font-size:24px;line-height:24px;color:#d6d6d6;font-weight:400;letter-spacing:0.312px;">aujourd’hui 13:18</div>
<div class="t" style="left:689.25px;width:300px;text-align:center;top:1404.08px;font-size:24px;line-height:24px;color:#d6d6d6;font-weight:400;letter-spacing:0.508px;">Non téléchargé</div>
<svg style="position:absolute;left:1056.0px;top:1098.4px;" width="131" height="172" viewBox="0 0 131 172"><path d="M10.3 3 H82.5 Q85 3 86.8 4.8 L126.2 43.3 Q128 45.1 128 47.6 V161.5 Q128 168.5 121 168.5 H10.1 Q3.1 168.5 3.1 161.5 V10 Q3.1 3 10.3 3 Z" fill="#e1e1e1" stroke="#eeeeee" stroke-width="2.2"/><path d="M86.8 4.5 V35.5 Q86.8 43.5 94.8 43.5 H126.5" fill="none" stroke="#d9d9d9" stroke-width="1.6"/><path d="M93.08 62.86 A 36 36 0 1 1 78.40 52.39" fill="none" stroke="#fff" stroke-width="6.3" stroke-linecap="round"/></svg>
<div class="t" style="left:971.50px;width:300px;text-align:center;top:1284.00px;font-size:30px;line-height:30px;color:#bfbfbf;font-weight:400;transform:scaleX(0.9111);transform-origin:50% 50%;">10 RÉFLEXES</div>
<div class="t" style="left:971.50px;width:300px;text-align:center;top:1323.80px;font-size:30px;line-height:30px;color:#bfbfbf;font-weight:400;transform:scaleX(0.9742);transform-origin:50% 50%;">POUR...c 3.pdf</div>
<div class="t" style="left:971.66px;width:300px;text-align:center;top:1366.98px;font-size:24px;line-height:24px;color:#d6d6d6;font-weight:400;letter-spacing:0.312px;">aujourd’hui 13:18</div>
<div class="t" style="left:971.75px;width:300px;text-align:center;top:1404.08px;font-size:24px;line-height:24px;color:#d6d6d6;font-weight:400;letter-spacing:0.508px;">Non téléchargé</div>
<svg style="position:absolute;left:1338.5px;top:1098.4px;" width="131" height="172" viewBox="0 0 131 172"><path d="M10.3 3 H82.5 Q85 3 86.8 4.8 L126.2 43.3 Q128 45.1 128 47.6 V161.5 Q128 168.5 121 168.5 H10.1 Q3.1 168.5 3.1 161.5 V10 Q3.1 3 10.3 3 Z" fill="#e1e1e1" stroke="#eeeeee" stroke-width="2.2"/><path d="M86.8 4.5 V35.5 Q86.8 43.5 94.8 43.5 H126.5" fill="none" stroke="#d9d9d9" stroke-width="1.6"/><path d="M93.08 62.86 A 36 36 0 1 1 78.40 52.39" fill="none" stroke="#fff" stroke-width="6.3" stroke-linecap="round"/></svg>
<div class="t" style="left:1254.00px;width:300px;text-align:center;top:1284.00px;font-size:30px;line-height:30px;color:#bfbfbf;font-weight:400;transform:scaleX(0.9111);transform-origin:50% 50%;">10 RÉFLEXES</div>
<div class="t" style="left:1254.00px;width:300px;text-align:center;top:1323.80px;font-size:30px;line-height:30px;color:#bfbfbf;font-weight:400;transform:scaleX(0.9742);transform-origin:50% 50%;">POUR...c 4.pdf</div>
<div class="t" style="left:1254.16px;width:300px;text-align:center;top:1366.98px;font-size:24px;line-height:24px;color:#d6d6d6;font-weight:400;letter-spacing:0.312px;">aujourd’hui 13:18</div>
<div class="t" style="left:1254.25px;width:300px;text-align:center;top:1404.08px;font-size:24px;line-height:24px;color:#d6d6d6;font-weight:400;letter-spacing:0.508px;">Non téléchargé</div>
<svg style="position:absolute;left:1621.0px;top:1098.4px;" width="131" height="172" viewBox="0 0 131 172"><path d="M10.3 3 H82.5 Q85 3 86.8 4.8 L126.2 43.3 Q128 45.1 128 47.6 V161.5 Q128 168.5 121 168.5 H10.1 Q3.1 168.5 3.1 161.5 V10 Q3.1 3 10.3 3 Z" fill="#e1e1e1" stroke="#eeeeee" stroke-width="2.2"/><path d="M86.8 4.5 V35.5 Q86.8 43.5 94.8 43.5 H126.5" fill="none" stroke="#d9d9d9" stroke-width="1.6"/><path d="M93.08 62.86 A 36 36 0 1 1 78.40 52.39" fill="none" stroke="#fff" stroke-width="6.3" stroke-linecap="round"/></svg>
<div class="t" style="left:1536.50px;width:300px;text-align:center;top:1284.00px;font-size:30px;line-height:30px;color:#bfbfbf;font-weight:400;transform:scaleX(0.9111);transform-origin:50% 50%;">10 RÉFLEXES</div>
<div class="t" style="left:1536.50px;width:300px;text-align:center;top:1323.80px;font-size:30px;line-height:30px;color:#bfbfbf;font-weight:400;transform:scaleX(0.9742);transform-origin:50% 50%;">POUR...c 5.pdf</div>
<div class="t" style="left:1536.66px;width:300px;text-align:center;top:1366.98px;font-size:24px;line-height:24px;color:#d6d6d6;font-weight:400;letter-spacing:0.312px;">aujourd’hui 13:18</div>
<div class="t" style="left:1536.75px;width:300px;text-align:center;top:1404.08px;font-size:24px;line-height:24px;color:#d6d6d6;font-weight:400;letter-spacing:0.508px;">Non téléchargé</div>
<svg style="position:absolute;left:1903.5px;top:1098.4px;" width="131" height="172" viewBox="0 0 131 172"><path d="M10.3 3 H82.5 Q85 3 86.8 4.8 L126.2 43.3 Q128 45.1 128 47.6 V161.5 Q128 168.5 121 168.5 H10.1 Q3.1 168.5 3.1 161.5 V10 Q3.1 3 10.3 3 Z" fill="#e1e1e1" stroke="#eeeeee" stroke-width="2.2"/><path d="M86.8 4.5 V35.5 Q86.8 43.5 94.8 43.5 H126.5" fill="none" stroke="#d9d9d9" stroke-width="1.6"/><path d="M93.08 62.86 A 36 36 0 1 1 78.40 52.39" fill="none" stroke="#fff" stroke-width="6.3" stroke-linecap="round"/></svg>
<div class="t" style="left:1819.00px;width:300px;text-align:center;top:1284.00px;font-size:30px;line-height:30px;color:#bfbfbf;font-weight:400;transform:scaleX(0.9111);transform-origin:50% 50%;">10 RÉFLEXES</div>
<div class="t" style="left:1819.00px;width:300px;text-align:center;top:1323.80px;font-size:30px;line-height:30px;color:#bfbfbf;font-weight:400;transform:scaleX(0.9742);transform-origin:50% 50%;">POUR...c 6.pdf</div>
<div class="t" style="left:1819.16px;width:300px;text-align:center;top:1366.98px;font-size:24px;line-height:24px;color:#d6d6d6;font-weight:400;letter-spacing:0.312px;">aujourd’hui 13:18</div>
<div class="t" style="left:1819.25px;width:300px;text-align:center;top:1404.08px;font-size:24px;line-height:24px;color:#d6d6d6;font-weight:400;letter-spacing:0.508px;">Non téléchargé</div>
<svg style="position:absolute;left:2186.0px;top:1098.4px;" width="131" height="172" viewBox="0 0 131 172"><path d="M10.3 3 H82.5 Q85 3 86.8 4.8 L126.2 43.3 Q128 45.1 128 47.6 V161.5 Q128 168.5 121 168.5 H10.1 Q3.1 168.5 3.1 161.5 V10 Q3.1 3 10.3 3 Z" fill="#e1e1e1" stroke="#eeeeee" stroke-width="2.2"/><path d="M86.8 4.5 V35.5 Q86.8 43.5 94.8 43.5 H126.5" fill="none" stroke="#d9d9d9" stroke-width="1.6"/><path d="M93.08 62.86 A 36 36 0 1 1 78.40 52.39" fill="none" stroke="#fff" stroke-width="6.3" stroke-linecap="round"/></svg>
<div class="t" style="left:2101.50px;width:300px;text-align:center;top:1284.00px;font-size:30px;line-height:30px;color:#bfbfbf;font-weight:400;transform:scaleX(0.9111);transform-origin:50% 50%;">10 RÉFLEXES</div>
<div class="t" style="left:2101.50px;width:300px;text-align:center;top:1323.80px;font-size:30px;line-height:30px;color:#bfbfbf;font-weight:400;transform:scaleX(0.9742);transform-origin:50% 50%;">POUR...c 7.pdf</div>
<div class="t" style="left:2101.66px;width:300px;text-align:center;top:1366.98px;font-size:24px;line-height:24px;color:#d6d6d6;font-weight:400;letter-spacing:0.312px;">aujourd’hui 13:18</div>
<div class="t" style="left:2101.75px;width:300px;text-align:center;top:1404.08px;font-size:24px;line-height:24px;color:#d6d6d6;font-weight:400;letter-spacing:0.508px;">Non téléchargé</div>
<svg style="position:absolute;left:2468.5px;top:1098.4px;" width="131" height="172" viewBox="0 0 131 172"><path d="M10.3 3 H82.5 Q85 3 86.8 4.8 L126.2 43.3 Q128 45.1 128 47.6 V161.5 Q128 168.5 121 168.5 H10.1 Q3.1 168.5 3.1 161.5 V10 Q3.1 3 10.3 3 Z" fill="#e1e1e1" stroke="#eeeeee" stroke-width="2.2"/><path d="M86.8 4.5 V35.5 Q86.8 43.5 94.8 43.5 H126.5" fill="none" stroke="#d9d9d9" stroke-width="1.6"/><path d="M93.08 62.86 A 36 36 0 1 1 78.40 52.39" fill="none" stroke="#fff" stroke-width="6.3" stroke-linecap="round"/></svg>
<div class="t" style="left:2384.19px;width:300px;text-align:center;top:1284.00px;font-size:30px;line-height:30px;color:#bfbfbf;font-weight:400;letter-spacing:0.38px;">bresil aéroports</div>
<div class="t" style="left:2384.17px;width:300px;text-align:center;top:1323.80px;font-size:30px;line-height:30px;color:#bfbfbf;font-weight:400;letter-spacing:0.343px;">- Goog...ps.pdf</div>
<div class="t" style="left:2384.16px;width:300px;text-align:center;top:1366.98px;font-size:24px;line-height:24px;color:#d6d6d6;font-weight:400;letter-spacing:0.312px;">aujourd’hui 13:18</div>
<div class="t" style="left:2384.25px;width:300px;text-align:center;top:1404.08px;font-size:24px;line-height:24px;color:#d6d6d6;font-weight:400;letter-spacing:0.508px;">Non téléchargé</div>
<svg style="position:absolute;left:780.3px;top:1509.8px;" width="119" height="168" viewBox="0 0 119 168"><rect x="0.65" y="0.65" width="117.10000000000001" height="166.0" rx="6" fill="#fff" stroke="#cfcfcf" stroke-width="1.3"/><rect x="9.8" y="10" width="58.50" height="3.70" fill="#ccf5c8"/><rect x="10.5" y="11" width="20" height="1.8" fill="#2d4a2d" opacity="0.7"/><rect x="9.8" y="24.1" width="98.90" height="3.10" fill="#3575c6"/><rect x="68.9" y="27.4" width="12.60" height="2.60" fill="#e0864a"/><rect x="95.5" y="27.4" width="13.20" height="2.60" fill="#e0864a"/><rect x="68.9" y="30.3" width="26.60" height="2.20" fill="#e0864a"/><rect x="68.9" y="32.7" width="39.80" height="4.80" fill="#cccccc"/><rect x="68.9" y="38.5" width="26.60" height="2.00" fill="#e0864a"/><rect x="68.9" y="40.8" width="12.60" height="1.70" fill="#e0864a"/><rect x="9.8" y="43.1" width="98.90" height="3.30" fill="#3575c6"/><rect x="68.9" y="49.6" width="39.80" height="5.30" fill="#d0d0d0"/><rect x="68.9" y="55.2" width="26.60" height="2.00" fill="#e0864a"/><rect x="68.9" y="58" width="12.60" height="1.50" fill="#d5d5d5"/><rect x="68.9" y="60" width="39.80" height="2.00" fill="#e0864a"/><rect x="68.9" y="62.3" width="12.60" height="2.20" fill="#e0864a"/><rect x="68.9" y="64.7" width="12.60" height="1.80" fill="#bdbdbd"/><rect x="81.5" y="64.7" width="27.20" height="1.80" fill="#e0864a"/><rect x="68.9" y="67" width="12.60" height="1.80" fill="#e0864a"/><rect x="9.8" y="69.6" width="58.50" height="2.70" fill="#e8342a"/><rect x="68.9" y="69.6" width="39.80" height="2.70" fill="#d0d0d0"/><rect x="68.9" y="72.8" width="39.80" height="1.70" fill="#e0864a"/><rect x="9.8" y="74.7" width="58.50" height="5.00" fill="#e8342a"/><rect x="68.9" y="74.7" width="39.80" height="2.30" fill="#c8c8c8"/><rect x="68.9" y="80" width="39.80" height="1.50" fill="#dcdcdc"/><rect x="68.9" y="82.3" width="26.60" height="2.20" fill="#e0864a"/><rect x="95.5" y="84.5" width="13.20" height="2.00" fill="#c8c8c8"/><rect x="68.9" y="84.8" width="26.60" height="38.10" fill="#e0864a"/><rect x="95.5" y="87.5" width="13.20" height="2.00" fill="#e0864a"/><rect x="95.5" y="91" width="13.20" height="2.00" fill="#e0864a"/><rect x="95.5" y="95" width="13.20" height="2.00" fill="#d0d0d0"/><rect x="68.9" y="101" width="39.80" height="2.00" fill="#d5d5d5"/><rect x="95.5" y="104.5" width="13.20" height="2.00" fill="#e0864a"/><rect x="95.5" y="113" width="13.20" height="7.00" fill="#e0864a"/><rect x="81.5" y="120" width="27.20" height="2.90" fill="#e0864a"/><rect x="68.9" y="123.5" width="12.60" height="1.70" fill="#e0864a"/><rect x="68.9" y="127.5" width="39.80" height="2.00" fill="#e0864a"/><rect x="68.9" y="130.6" width="26.60" height="2.10" fill="#f5f05a"/><rect x="9.8" y="132.7" width="98.90" height="6.60" fill="#3575c6"/><rect x="9.8" y="141.9" width="58.50" height="2.70" fill="#ccf5c8"/><rect x="45.3" y="30.5" width="22.7" height="1" fill="#555" opacity="0.55"/><rect x="51.0" y="32" width="17.0" height="1" fill="#555" opacity="0.55"/><rect x="34.5" y="35" width="33.5" height="1" fill="#555" opacity="0.55"/><rect x="53.6" y="38.5" width="14.4" height="1" fill="#555" opacity="0.55"/><rect x="38.3" y="40.5" width="29.7" height="1" fill="#555" opacity="0.55"/><rect x="43.9" y="52" width="24.1" height="1" fill="#555" opacity="0.55"/><rect x="54.1" y="54" width="13.9" height="1" fill="#555" opacity="0.55"/><rect x="39.3" y="57" width="28.7" height="1" fill="#555" opacity="0.55"/><rect x="54.8" y="59" width="13.2" height="1" fill="#555" opacity="0.55"/><rect x="41.7" y="61" width="26.3" height="1" fill="#555" opacity="0.55"/><rect x="53.7" y="64" width="14.3" height="1" fill="#555" opacity="0.55"/><rect x="53.0" y="66.5" width="15.0" height="1" fill="#555" opacity="0.55"/><rect x="42.0" y="68" width="26.0" height="1" fill="#555" opacity="0.55"/><rect x="28.7" y="73" width="39.3" height="1" fill="#555" opacity="0.55"/><rect x="51.9" y="80.5" width="16.1" height="1" fill="#555" opacity="0.55"/><rect x="48.6" y="83.5" width="19.4" height="1" fill="#555" opacity="0.55"/><rect x="35.3" y="86.5" width="32.7" height="1" fill="#555" opacity="0.55"/><rect x="24.7" y="88.5" width="43.3" height="1" fill="#555" opacity="0.55"/><rect x="37.0" y="91" width="31.0" height="1" fill="#555" opacity="0.55"/><rect x="42.9" y="93" width="25.1" height="1" fill="#555" opacity="0.55"/><rect x="23.8" y="96" width="44.2" height="1" fill="#555" opacity="0.55"/><rect x="54.5" y="98.5" width="13.5" height="1" fill="#555" opacity="0.55"/><rect x="27.7" y="101" width="40.3" height="1" fill="#555" opacity="0.55"/><rect x="46.4" y="104.5" width="21.6" height="1" fill="#555" opacity="0.55"/><rect x="51.2" y="106.5" width="16.8" height="1" fill="#555" opacity="0.55"/><rect x="52.1" y="110" width="15.9" height="1" fill="#555" opacity="0.55"/><rect x="45.8" y="112" width="22.2" height="1" fill="#555" opacity="0.55"/><rect x="29.1" y="115" width="38.9" height="1" fill="#555" opacity="0.55"/><rect x="50.0" y="117.5" width="18.0" height="1" fill="#555" opacity="0.55"/><rect x="36.8" y="119.5" width="31.2" height="1" fill="#555" opacity="0.55"/><rect x="34.9" y="123" width="33.1" height="1" fill="#555" opacity="0.55"/><rect x="43.7" y="125" width="24.3" height="1" fill="#555" opacity="0.55"/><rect x="37.9" y="127.5" width="30.1" height="1" fill="#555" opacity="0.55"/><rect x="53.9" y="130" width="14.1" height="1" fill="#555" opacity="0.55"/><rect x="18" y="25.2" width="40" height="1.1" fill="#fff" opacity="0.6"/><rect x="18" y="44.3" width="40" height="1.1" fill="#fff" opacity="0.6"/><rect x="18" y="134" width="40" height="1.1" fill="#fff" opacity="0.6"/><rect x="18" y="136.8" width="40" height="1.1" fill="#fff" opacity="0.6"/><rect x="3" y="158" width="18" height="0.9" fill="#666" opacity="0.5"/><rect x="95" y="158" width="15" height="0.9" fill="#666" opacity="0.5"/><rect x="68.9" y="16.4" width="4.5" height="0.9" fill="#3d6fd0" opacity="0.6"/><rect x="81.7" y="16.4" width="4.5" height="0.9" fill="#3d6fd0" opacity="0.6"/><rect x="95.8" y="16.4" width="4.5" height="0.9" fill="#3d6fd0" opacity="0.6"/><rect x="69" y="22.3" width="12" height="0.9" fill="#3d6fd0" opacity="0.5"/><rect x="82.5" y="22.3" width="12.5" height="0.9" fill="#3d6fd0" opacity="0.5"/><rect x="96" y="22.3" width="12" height="0.9" fill="#3d6fd0" opacity="0.5"/><rect x="20" y="22.3" width="25" height="0.8" fill="#3d6fd0" opacity="0.4"/><rect x="72.2" y="28.2" width="7.0" height="0.8" fill="#333" opacity="0.4"/><rect x="98.5" y="28.2" width="7.5" height="0.8" fill="#333" opacity="0.4"/><rect x="71.1" y="31" width="7.0" height="0.8" fill="#333" opacity="0.4"/><rect x="85.4" y="31" width="7.5" height="0.8" fill="#333" opacity="0.4"/><rect x="71.4" y="39" width="7.0" height="0.8" fill="#333" opacity="0.4"/><rect x="85.9" y="39" width="7.5" height="0.8" fill="#333" opacity="0.4"/><rect x="97.1" y="39" width="7.5" height="0.8" fill="#333" opacity="0.4"/><rect x="98.8" y="41.3" width="7.5" height="0.8" fill="#333" opacity="0.4"/><rect x="70.5" y="55.8" width="7.0" height="0.8" fill="#333" opacity="0.4"/><rect x="83.7" y="55.8" width="7.5" height="0.8" fill="#333" opacity="0.4"/><rect x="97.7" y="55.8" width="7.5" height="0.8" fill="#333" opacity="0.4"/><rect x="71.9" y="60.7" width="7.0" height="0.8" fill="#333" opacity="0.4"/><rect x="86.0" y="60.7" width="7.5" height="0.8" fill="#333" opacity="0.4"/><rect x="98.9" y="60.7" width="7.5" height="0.8" fill="#333" opacity="0.4"/><rect x="72.5" y="63" width="7.0" height="0.8" fill="#333" opacity="0.4"/><rect x="84.3" y="63" width="7.5" height="0.8" fill="#333" opacity="0.4"/><rect x="71.2" y="73.3" width="7.0" height="0.8" fill="#333" opacity="0.4"/><rect x="83.7" y="73.3" width="7.5" height="0.8" fill="#333" opacity="0.4"/><rect x="73.0" y="83" width="7.0" height="0.8" fill="#333" opacity="0.4"/><rect x="86.4" y="83" width="7.5" height="0.8" fill="#333" opacity="0.4"/><rect x="71.1" y="85.5" width="7.0" height="0.8" fill="#333" opacity="0.4"/><rect x="99.9" y="85.5" width="7.5" height="0.8" fill="#333" opacity="0.4"/><rect x="70.7" y="88" width="7.0" height="0.8" fill="#333" opacity="0.4"/><rect x="85.8" y="88" width="7.5" height="0.8" fill="#333" opacity="0.4"/><rect x="97.3" y="88" width="7.5" height="0.8" fill="#333" opacity="0.4"/><rect x="73.4" y="90.5" width="7.0" height="0.8" fill="#333" opacity="0.4"/><rect x="97.7" y="90.5" width="7.5" height="0.8" fill="#333" opacity="0.4"/><rect x="70.7" y="93" width="7.0" height="0.8" fill="#333" opacity="0.4"/><rect x="98.7" y="93" width="7.5" height="0.8" fill="#333" opacity="0.4"/><rect x="71.1" y="95.5" width="7.0" height="0.8" fill="#333" opacity="0.4"/><rect x="98.9" y="95.5" width="7.5" height="0.8" fill="#333" opacity="0.4"/><rect x="71.8" y="98" width="7.0" height="0.8" fill="#333" opacity="0.4"/><rect x="84.3" y="98" width="7.5" height="0.8" fill="#333" opacity="0.4"/><rect x="86.2" y="100.5" width="7.5" height="0.8" fill="#333" opacity="0.4"/><rect x="98.2" y="100.5" width="7.5" height="0.8" fill="#333" opacity="0.4"/><rect x="83.8" y="105" width="7.5" height="0.8" fill="#333" opacity="0.4"/><rect x="71.3" y="107.5" width="7.0" height="0.8" fill="#333" opacity="0.4"/><rect x="97.9" y="107.5" width="7.5" height="0.8" fill="#333" opacity="0.4"/><rect x="70.8" y="110" width="7.0" height="0.8" fill="#333" opacity="0.4"/><rect x="84.2" y="110" width="7.5" height="0.8" fill="#333" opacity="0.4"/><rect x="98.1" y="110" width="7.5" height="0.8" fill="#333" opacity="0.4"/><rect x="73.4" y="112.5" width="7.0" height="0.8" fill="#333" opacity="0.4"/><rect x="85.2" y="112.5" width="7.5" height="0.8" fill="#333" opacity="0.4"/><rect x="71.0" y="115" width="7.0" height="0.8" fill="#333" opacity="0.4"/><rect x="71.1" y="117.5" width="7.0" height="0.8" fill="#333" opacity="0.4"/><rect x="73.4" y="120" width="7.0" height="0.8" fill="#333" opacity="0.4"/><rect x="98.3" y="120" width="7.5" height="0.8" fill="#333" opacity="0.4"/><rect x="70.6" y="124" width="7.0" height="0.8" fill="#333" opacity="0.4"/><rect x="99.1" y="124" width="7.5" height="0.8" fill="#333" opacity="0.4"/><rect x="73.0" y="128.2" width="7.0" height="0.8" fill="#333" opacity="0.4"/><rect x="84.4" y="128.2" width="7.5" height="0.8" fill="#333" opacity="0.4"/><rect x="99.2" y="128.2" width="7.5" height="0.8" fill="#333" opacity="0.4"/><rect x="71.2" y="131.2" width="7.0" height="0.8" fill="#333" opacity="0.4"/><rect x="86.1" y="131.2" width="7.5" height="0.8" fill="#333" opacity="0.4"/><rect x="97.8" y="131.2" width="7.5" height="0.8" fill="#333" opacity="0.4"/><rect x="83.5" y="134" width="7.5" height="0.8" fill="#333" opacity="0.4"/><rect x="98.3" y="134" width="7.5" height="0.8" fill="#333" opacity="0.4"/><rect x="71.0" y="136.8" width="7.0" height="0.8" fill="#333" opacity="0.4"/><rect x="85.2" y="136.8" width="7.5" height="0.8" fill="#333" opacity="0.4"/><rect x="98.1" y="136.8" width="7.5" height="0.8" fill="#333" opacity="0.4"/><rect x="99.1" y="150" width="7.5" height="0.8" fill="#333" opacity="0.4"/><rect x="70.9" y="152.5" width="7.0" height="0.8" fill="#333" opacity="0.4"/><rect x="83.6" y="152.5" width="7.5" height="0.8" fill="#333" opacity="0.4"/></svg>
<div class="t" style="left:689.31px;width:300px;text-align:center;top:1693.20px;font-size:30px;line-height:30px;color:#000;font-weight:400;letter-spacing:0.615px;">Comptes Anne -</div>
<div class="t" style="left:689.11px;width:300px;text-align:center;top:1733.00px;font-size:30px;line-height:30px;color:#000;font-weight:400;letter-spacing:0.212px;">Anne réel</div>
<div class="t" style="left:689.16px;width:300px;text-align:center;top:1776.18px;font-size:24px;line-height:24px;color:#8a8a8e;font-weight:400;letter-spacing:0.327px;">07/11/2020 12:39</div>
<div class="t" style="left:689.16px;width:300px;text-align:center;top:1813.28px;font-size:24px;line-height:24px;color:#8a8a8e;font-weight:400;letter-spacing:0.311px;">60 ko</div>
<svg style="position:absolute;left:1037.5px;top:1545.0px;" width="168" height="132" viewBox="0 0 168 132"><defs><linearGradient id="fg" x1="0" y1="0" x2="0" y2="1"><stop offset="0" stop-color="#8ccbef"/><stop offset="1" stop-color="#a2d8f6"/></linearGradient></defs><path d="M0 10.5 Q0 0 10.5 0 H45.5 Q50 0 53 3.5 L59.5 10.8 Q62.5 14.3 67 14.3 H158 Q168 14.3 168 24.3 V40 H0 Z" fill="#aadcf8"/><path d="M0 36.8 Q0 26.5 10.3 26.5 H157.7 Q168 26.5 168 36.8 V120 Q168 132 156 132 H12 Q0 132 0 120 Z" fill="url(#fg)"/></svg>
<div class="t" style="left:971.50px;width:300px;text-align:center;top:1693.20px;font-size:30px;line-height:30px;color:#000;font-weight:400;transform:scaleX(0.9611);transform-origin:50% 50%;">CV ASP</div>
<div class="t" style="left:971.75px;width:300px;text-align:center;top:1736.38px;font-size:24px;line-height:24px;color:#8a8a8e;font-weight:400;letter-spacing:0.5px;">7 éléments</div>
<svg style="position:absolute;left:1320.0px;top:1545.0px;" width="168" height="132" viewBox="0 0 168 132"><defs><linearGradient id="fg" x1="0" y1="0" x2="0" y2="1"><stop offset="0" stop-color="#8ccbef"/><stop offset="1" stop-color="#a2d8f6"/></linearGradient></defs><path d="M0 10.5 Q0 0 10.5 0 H45.5 Q50 0 53 3.5 L59.5 10.8 Q62.5 14.3 67 14.3 H158 Q168 14.3 168 24.3 V40 H0 Z" fill="#aadcf8"/><path d="M0 36.8 Q0 26.5 10.3 26.5 H157.7 Q168 26.5 168 36.8 V120 Q168 132 156 132 H12 Q0 132 0 120 Z" fill="url(#fg)"/></svg>
<div class="t" style="left:1254.02px;width:300px;text-align:center;top:1693.20px;font-size:30px;line-height:30px;color:#000;font-weight:400;letter-spacing:0.033px;">CV modèles</div>
<div class="t" style="left:1254.36px;width:300px;text-align:center;top:1736.38px;font-size:24px;line-height:24px;color:#8a8a8e;font-weight:400;letter-spacing:0.711px;">4 éléments</div>
<svg style="position:absolute;left:1621.0px;top:1507.6px;" width="131" height="172" viewBox="0 0 131 172"><path d="M10.3 3 H82.5 Q85 3 86.8 4.8 L126.2 43.3 Q128 45.1 128 47.6 V161.5 Q128 168.5 121 168.5 H10.1 Q3.1 168.5 3.1 161.5 V10 Q3.1 3 10.3 3 Z" fill="#e1e1e1" stroke="#eeeeee" stroke-width="2.2"/><path d="M86.8 4.5 V35.5 Q86.8 43.5 94.8 43.5 H126.5" fill="none" stroke="#d9d9d9" stroke-width="1.6"/><path d="M93.08 62.86 A 36 36 0 1 1 78.40 52.39" fill="none" stroke="#fff" stroke-width="6.3" stroke-linecap="round"/></svg>
<div class="t" style="left:1536.50px;width:300px;text-align:center;top:1693.20px;font-size:30px;line-height:30px;color:#bfbfbf;font-weight:400;transform:scaleX(0.9873);transform-origin:50% 50%;">Devenez</div>
<div class="t" style="left:1536.69px;width:300px;text-align:center;top:1733.00px;font-size:30px;line-height:30px;color:#bfbfbf;font-weight:400;letter-spacing:0.373px;">franchi...za.pdf</div>
<div class="t" style="left:1536.66px;width:300px;text-align:center;top:1776.18px;font-size:24px;line-height:24px;color:#d6d6d6;font-weight:400;letter-spacing:0.312px;">aujourd’hui 13:18</div>
<div class="t" style="left:1536.75px;width:300px;text-align:center;top:1813.28px;font-size:24px;line-height:24px;color:#d6d6d6;font-weight:400;letter-spacing:0.508px;">Non téléchargé</div>
<svg style="position:absolute;left:1885.0px;top:1545.0px;" width="168" height="132" viewBox="0 0 168 132"><defs><linearGradient id="fg" x1="0" y1="0" x2="0" y2="1"><stop offset="0" stop-color="#8ccbef"/><stop offset="1" stop-color="#a2d8f6"/></linearGradient></defs><path d="M0 10.5 Q0 0 10.5 0 H45.5 Q50 0 53 3.5 L59.5 10.8 Q62.5 14.3 67 14.3 H158 Q168 14.3 168 24.3 V40 H0 Z" fill="#aadcf8"/><path d="M0 36.8 Q0 26.5 10.3 26.5 H157.7 Q168 26.5 168 36.8 V120 Q168 132 156 132 H12 Q0 132 0 120 Z" fill="url(#fg)"/></svg>
<div class="t" style="left:1819.00px;width:300px;text-align:center;top:1693.20px;font-size:30px;line-height:30px;color:#000;font-weight:400;transform:scaleX(0.9980);transform-origin:50% 50%;">Documents RH</div>
<div class="t" style="left:1819.09px;width:300px;text-align:center;top:1733.00px;font-size:30px;line-height:30px;color:#000;font-weight:400;letter-spacing:0.185px;">et évaluations</div>
<div class="t" style="left:1819.29px;width:300px;text-align:center;top:1776.18px;font-size:24px;line-height:24px;color:#8a8a8e;font-weight:400;letter-spacing:0.57px;">32 éléments</div>
<svg style="position:absolute;left:2168.4px;top:1559.0px;" width="168" height="118" viewBox="0 0 168 118"><defs><clipPath id="ce"><rect x="0" y="0" width="167.2" height="118" rx="6"/></clipPath></defs><rect x="0.65" y="0.65" width="165.89999999999998" height="116.7" rx="6" fill="#fff"/><g clip-path="url(#ce)"><path d="M12.5 2.1 H33.8 L39.4 10.9 V53.1 H6.9 V10.9 Z" fill="#ebe1e8" stroke="#e2e2e2" stroke-width="0.6"/><path d="M6.9 42.1 Q23.15 35.1 39.4 42.1 V53.1 H6.9 Z" fill="#fff"/><circle cx="23.15" cy="6.9" r="1.3" fill="#fff" stroke="#bbb" stroke-width="0.5"/><path d="M52.300000000000004 2.1 H73.60000000000001 L79.2 10.9 V53.1 H46.7 V10.9 Z" fill="#c9d6f2" stroke="#e2e2e2" stroke-width="0.6"/><path d="M46.7 42.1 Q62.95 35.1 79.2 42.1 V53.1 H46.7 Z" fill="#fff"/><circle cx="62.95" cy="6.9" r="1.3" fill="#fff" stroke="#bbb" stroke-width="0.5"/><path d="M92.6 2.1 H113.9 L119.5 10.9 V53.1 H87 V10.9 Z" fill="#eec4c6" stroke="#e2e2e2" stroke-width="0.6"/><path d="M87 42.1 Q103.25 35.1 119.5 42.1 V53.1 H87 Z" fill="#fff"/><circle cx="103.25" cy="6.9" r="1.3" fill="#fff" stroke="#bbb" stroke-width="0.5"/><path d="M133.1 2.1 H154.4 L160.0 10.9 V53.1 H127.5 V10.9 Z" fill="#e3ebe3" stroke="#e2e2e2" stroke-width="0.6"/><path d="M127.5 42.1 Q143.75 35.1 160.0 42.1 V53.1 H127.5 Z" fill="#fff"/><circle cx="143.75" cy="6.9" r="1.3" fill="#fff" stroke="#bbb" stroke-width="0.5"/><path d="M12.5 65.7 H33.8 L39.4 74.5 V116.7 H6.9 V74.5 Z" fill="#e3ebe3" stroke="#e2e2e2" stroke-width="0.6"/><path d="M6.9 105.7 Q23.15 98.7 39.4 105.7 V116.7 H6.9 Z" fill="#fff"/><circle cx="23.15" cy="70.5" r="1.3" fill="#fff" stroke="#bbb" stroke-width="0.5"/><path d="M52.300000000000004 65.7 H73.60000000000001 L79.2 74.5 V116.7 H46.7 V74.5 Z" fill="#ebe1e8" stroke="#e2e2e2" stroke-width="0.6"/><path d="M46.7 105.7 Q62.95 98.7 79.2 105.7 V116.7 H46.7 Z" fill="#fff"/><circle cx="62.95" cy="70.5" r="1.3" fill="#fff" stroke="#bbb" stroke-width="0.5"/><path d="M92.6 65.7 H113.9 L119.5 74.5 V116.7 H87 V74.5 Z" fill="#dcd3c6" stroke="#e2e2e2" stroke-width="0.6"/><path d="M87 105.7 Q103.25 98.7 119.5 105.7 V116.7 H87 Z" fill="#fff"/><circle cx="103.25" cy="70.5" r="1.3" fill="#fff" stroke="#bbb" stroke-width="0.5"/><path d="M133.1 65.7 H154.4 L160.0 74.5 V116.7 H127.5 V74.5 Z" fill="#eec4c6" stroke="#e2e2e2" stroke-width="0.6"/><path d="M127.5 105.7 Q143.75 98.7 160.0 105.7 V116.7 H127.5 Z" fill="#fff"/><circle cx="143.75" cy="70.5" r="1.3" fill="#fff" stroke="#bbb" stroke-width="0.5"/><polygon points="15.1,19.2 19.2,14.2 25.1,13.8 28.4,18.8" fill="#d8262b"/><circle cx="14.2" cy="14.1" r="1.0" fill="#f0c020"/><circle cx="22.2" cy="23.8" r="6.0" fill="#f6d3a0"/><polygon points="15.9,28.4 29.3,27.6 32.6,23.8 30.9,30.9 29.3,38.5 30.9,39.7 25.1,38.5 19.2,38.5 17.6,39.7 16.7,35.1 13.4,33.5" fill="#d8262b"/><circle cx="61.5" cy="33.5" r="7.1" fill="#fff"/><circle cx="64.4" cy="23.8" r="5.2" fill="#fff"/><polygon points="60.2,16.7 71.9,14.2 74.0,20.9 71.1,26.8 66.1,19.2" fill="#222"/><polygon points="58.5,27.6 66.9,28.4 66.1,30.9 62.7,30.9 61.1,37.6 58.5,36.8" fill="#d8262b"/><polygon points="62.7,22.6 60.2,24.3 63.6,23.8" fill="#f08020"/><circle cx="103.3" cy="24.3" r="7.9" fill="#d8262b"/><ellipse cx="103.3" cy="28.4" rx="6.7" ry="8.4" fill="#fff"/><ellipse cx="103.3" cy="23.0" rx="2.9" ry="2.1" fill="#f2c8a8"/><polygon points="93.7,28.4 97.9,29.3 100.4,38.5 94.5,35.1" fill="#d8262b"/><polygon points="112.9,28.4 108.7,29.3 106.2,38.5 111.2,35.1" fill="#d8262b"/><circle cx="96.6" cy="30.1" r="1.5" fill="#222"/><circle cx="110.4" cy="30.9" r="1.5" fill="#222"/><polygon points="137.2,13.4 140.5,20.9 142.2,20.1 138.8,13.4" fill="#9a5a2a"/><polygon points="150.5,13.0 147.2,20.9 145.5,20.1 148.9,12.5" fill="#9a5a2a"/><circle cx="143.0" cy="24.3" r="4.6" fill="#8b5428"/><ellipse cx="143.4" cy="34.3" rx="10.0" ry="6.3" fill="#9a6030"/><polygon points="138.0,29.3 148.0,28.4 147.2,35.1 138.8,36.0" fill="#3b8a3b"/><polygon points="143.0,16.7 150.5,15.9 152.2,21.7 145.5,20.1" fill="#d8262b"/><ellipse cx="23.0" cy="93.7" rx="11.7" ry="5.9" fill="#3f8a3a"/><polygon points="20.9,78.6 25.1,78.6 25.5,94.5 20.5,94.5" fill="#e0a020"/><ellipse cx="16.7" cy="94.5" rx="5.0" ry="3.8" fill="#d8262b"/><ellipse cx="30.1" cy="94.5" rx="5.0" ry="3.8" fill="#d8262b"/><circle cx="23.4" cy="93.3" r="2.5" fill="#c02020"/><circle cx="23.0" cy="77.8" r="0.8" fill="#f0d040"/><ellipse cx="56.5" cy="91.6" rx="7.5" ry="7.9" fill="#c8262b"/><ellipse cx="66.9" cy="93.7" rx="6.7" ry="9.2" fill="#fff"/><polygon points="61.1,85.3 66.9,82.4 71.9,87.0 65.2,87.0" fill="#d8262b"/><ellipse cx="65.2" cy="89.5" rx="2.5" ry="1.8" fill="#f2c8a8"/><polygon points="61.9,97.0 71.1,94.5 73.6,100.4 66.9,102.9 61.9,102.0" fill="#d8262b"/><circle cx="102.9" cy="81.1" r="4.6" fill="#b87338"/><polygon points="93.3,87.0 99.5,85.3 106.2,85.3 114.2,87.0 112.1,90.3 107.1,89.9 107.9,95.3 113.7,99.5 110.4,101.2 102.9,97.0 95.3,101.2 93.3,99.5 97.9,95.3 98.7,89.9 93.7,90.3" fill="#b87338"/><circle cx="102.9" cy="90.7" r="0.8" fill="#d8262b"/><circle cx="102.9" cy="94.1" r="0.8" fill="#d8262b"/><polygon points="101.2,86.1 104.5,86.1 104.1,87.4 101.6,87.4" fill="#5a9a3a"/><polygon points="136.3,84.5 141.3,78.6 147.2,79.5 150.5,84.5" fill="#d8262b"/><circle cx="137.6" cy="77.8" r="1.0" fill="#f0c020"/><ellipse cx="143.4" cy="89.9" rx="7.1" ry="5.9" fill="#f6d3a0"/><circle cx="143.4" cy="92.8" r="1.2" fill="#c03030"/><polygon points="133.8,92.0 138.8,96.2 148.9,96.2 155.6,92.0 153.9,100.4 150.5,102.9 143.8,101.2 135.5,102.9 133.0,100.4" fill="#d8262b"/><rect x="7.4" y="52.4" width="31.5" height="1.2" fill="#bbb" opacity="0.5"/><rect x="47.2" y="52.4" width="31.5" height="1.2" fill="#bbb" opacity="0.5"/><rect x="87.5" y="52.4" width="31.5" height="1.2" fill="#bbb" opacity="0.5"/><rect x="128.0" y="52.4" width="31.5" height="1.2" fill="#bbb" opacity="0.5"/><rect x="7.4" y="116.0" width="31.5" height="1.2" fill="#bbb" opacity="0.5"/><rect x="47.2" y="116.0" width="31.5" height="1.2" fill="#bbb" opacity="0.5"/><rect x="87.5" y="116.0" width="31.5" height="1.2" fill="#bbb" opacity="0.5"/><rect x="128.0" y="116.0" width="31.5" height="1.2" fill="#bbb" opacity="0.5"/><rect x="28.4" y="58.6" width="109.6" height="1.5" fill="#d86a78" opacity="0.35"/></g><rect x="0.65" y="0.65" width="165.89999999999998" height="116.7" rx="6" fill="none" stroke="#bdbdbd" stroke-width="1.3"/></svg>
<div class="t" style="left:2101.71px;width:300px;text-align:center;top:1693.20px;font-size:30px;line-height:30px;color:#000;font-weight:400;letter-spacing:0.429px;">Étiquettes pour</div>
<div class="t" style="left:2101.50px;width:300px;text-align:center;top:1733.00px;font-size:30px;line-height:30px;color:#000;font-weight:400;transform:scaleX(0.9798);transform-origin:50% 50%;">cadeau...ATUIT</div>
<div class="t" style="left:2101.71px;width:300px;text-align:center;top:1776.18px;font-size:24px;line-height:24px;color:#8a8a8e;font-weight:400;letter-spacing:0.413px;">22/11/2020 18:01</div>
<div class="t" style="left:2101.88px;width:300px;text-align:center;top:1813.28px;font-size:24px;line-height:24px;color:#8a8a8e;font-weight:400;letter-spacing:0.75px;">72 ko</div>
<svg style="position:absolute;left:2450.0px;top:1545.0px;" width="168" height="132" viewBox="0 0 168 132"><defs><linearGradient id="fg" x1="0" y1="0" x2="0" y2="1"><stop offset="0" stop-color="#8ccbef"/><stop offset="1" stop-color="#a2d8f6"/></linearGradient></defs><path d="M0 10.5 Q0 0 10.5 0 H45.5 Q50 0 53 3.5 L59.5 10.8 Q62.5 14.3 67 14.3 H158 Q168 14.3 168 24.3 V40 H0 Z" fill="#aadcf8"/><path d="M0 36.8 Q0 26.5 10.3 26.5 H157.7 Q168 26.5 168 36.8 V120 Q168 132 156 132 H12 Q0 132 0 120 Z" fill="url(#fg)"/></svg>
<div class="t" style="left:2384.00px;width:300px;text-align:center;top:1693.20px;font-size:30px;line-height:30px;color:#000;font-weight:400;transform:scaleX(0.9630);transform-origin:50% 50%;">Fannie</div>
<div class="t" style="left:2384.29px;width:300px;text-align:center;top:1736.38px;font-size:24px;line-height:24px;color:#8a8a8e;font-weight:400;letter-spacing:0.589px;">2 éléments</div>
<svg style="position:absolute;left:773.5px;top:1916.8px;" width="131" height="172" viewBox="0 0 131 172"><path d="M10.3 3 H82.5 Q85 3 86.8 4.8 L126.2 43.3 Q128 45.1 128 47.6 V161.5 Q128 168.5 121 168.5 H10.1 Q3.1 168.5 3.1 161.5 V10 Q3.1 3 10.3 3 Z" fill="#e1e1e1" stroke="#eeeeee" stroke-width="2.2"/><path d="M86.8 4.5 V35.5 Q86.8 43.5 94.8 43.5 H126.5" fill="none" stroke="#d9d9d9" stroke-width="1.6"/><path d="M93.08 62.86 A 36 36 0 1 1 78.40 52.39" fill="none" stroke="#fff" stroke-width="6.3" stroke-linecap="round"/></svg>
<svg style="position:absolute;left:1056.0px;top:1916.8px;" width="131" height="172" viewBox="0 0 131 172"><path d="M10.3 3 H82.5 Q85 3 86.8 4.8 L126.2 43.3 Q128 45.1 128 47.6 V161.5 Q128 168.5 121 168.5 H10.1 Q3.1 168.5 3.1 161.5 V10 Q3.1 3 10.3 3 Z" fill="#e1e1e1" stroke="#eeeeee" stroke-width="2.2"/><path d="M86.8 4.5 V35.5 Q86.8 43.5 94.8 43.5 H126.5" fill="none" stroke="#d9d9d9" stroke-width="1.6"/><path d="M93.08 62.86 A 36 36 0 1 1 78.40 52.39" fill="none" stroke="#fff" stroke-width="6.3" stroke-linecap="round"/></svg>
<svg style="position:absolute;left:1345.4px;top:1918.8px;" width="119" height="132" viewBox="0 0 119 132"><rect x="0.65" y="0.65" width="117.10000000000001" height="170" rx="7" fill="#fff" stroke="#c9c9c9" stroke-width="1.3"/><rect x="10.8" y="12.3" width="41.0" height="0.8" fill="#444" opacity="0.45"/><rect x="10.8" y="16.6" width="12.3" height="0.8" fill="#444" opacity="0.45"/><rect x="10.8" y="18.7" width="17.8" height="0.8" fill="#444" opacity="0.45"/><rect x="10.8" y="20.8" width="14.7" height="0.8" fill="#444" opacity="0.45"/><rect x="10.8" y="25.1" width="18.9" height="0.8" fill="#444" opacity="0.45"/><rect x="10.8" y="27.2" width="19.3" height="0.8" fill="#444" opacity="0.45"/><rect x="10.8" y="29.3" width="9.2" height="0.8" fill="#444" opacity="0.45"/><rect x="10.8" y="33.6" width="8.2" height="0.8" fill="#444" opacity="0.45"/><rect x="10.8" y="35.7" width="23.1" height="0.8" fill="#444" opacity="0.45"/><rect x="10.8" y="37.8" width="12.7" height="0.8" fill="#444" opacity="0.45"/><rect x="10.8" y="39.9" width="12.2" height="0.8" fill="#444" opacity="0.45"/><rect x="10.8" y="42.0" width="25.9" height="0.8" fill="#444" opacity="0.45"/><rect x="10.8" y="44.1" width="16.5" height="0.8" fill="#444" opacity="0.45"/><rect x="10.8" y="46.2" width="40.0" height="0.8" fill="#444" opacity="0.45"/><rect x="10.8" y="48.3" width="16.6" height="0.8" fill="#444" opacity="0.45"/><rect x="10.8" y="52.6" width="19.5" height="0.8" fill="#444" opacity="0.45"/><rect x="10.8" y="54.7" width="10.7" height="0.8" fill="#444" opacity="0.45"/><rect x="10.8" y="56.8" width="19.4" height="0.8" fill="#444" opacity="0.45"/><rect x="10.8" y="58.9" width="23.6" height="0.8" fill="#444" opacity="0.45"/><rect x="10.8" y="61.0" width="17.4" height="0.8" fill="#444" opacity="0.45"/><rect x="10.8" y="65.3" width="21.3" height="0.8" fill="#444" opacity="0.45"/><rect x="10.8" y="67.4" width="20.1" height="0.8" fill="#444" opacity="0.45"/><rect x="10.8" y="69.5" width="9.2" height="0.8" fill="#444" opacity="0.45"/><rect x="10.8" y="73.8" width="21.6" height="0.8" fill="#444" opacity="0.45"/><rect x="10.8" y="75.9" width="18.6" height="0.8" fill="#444" opacity="0.45"/><rect x="10.8" y="78.0" width="13.4" height="0.8" fill="#444" opacity="0.45"/><rect x="10.8" y="82.3" width="8.6" height="0.8" fill="#444" opacity="0.45"/><rect x="10.8" y="84.4" width="23.6" height="0.8" fill="#444" opacity="0.45"/><rect x="10.8" y="86.5" width="16.5" height="0.8" fill="#444" opacity="0.45"/><rect x="10.8" y="90.8" width="20.9" height="0.8" fill="#444" opacity="0.45"/><rect x="10.8" y="92.9" width="23.8" height="0.8" fill="#444" opacity="0.45"/><rect x="10.8" y="95.0" width="20.9" height="0.8" fill="#444" opacity="0.45"/><rect x="10.8" y="99.3" width="24.6" height="0.8" fill="#444" opacity="0.45"/><rect x="10.8" y="101.4" width="15.1" height="0.8" fill="#444" opacity="0.45"/><rect x="10.8" y="105.7" width="22.4" height="0.8" fill="#444" opacity="0.45"/><rect x="10.8" y="107.8" width="16.0" height="0.8" fill="#444" opacity="0.45"/><rect x="10.8" y="109.9" width="24.8" height="0.8" fill="#444" opacity="0.45"/><rect x="10.8" y="112.0" width="23.8" height="0.8" fill="#444" opacity="0.45"/><rect x="10.8" y="114.1" width="9.8" height="0.8" fill="#444" opacity="0.45"/><rect x="10.8" y="116.2" width="10.4" height="0.8" fill="#444" opacity="0.45"/></svg>
<svg style="position:absolute;left:1621.0px;top:1916.8px;" width="131" height="172" viewBox="0 0 131 172"><path d="M10.3 3 H82.5 Q85 3 86.8 4.8 L126.2 43.3 Q128 45.1 128 47.6 V161.5 Q128 168.5 121 168.5 H10.1 Q3.1 168.5 3.1 161.5 V10 Q3.1 3 10.3 3 Z" fill="#f9f9f9" stroke="#dedede" stroke-width="2.4"/><path d="M86.8 4.5 V35.5 Q86.8 43.5 94.8 43.5 H126.5" fill="#fff" stroke="#dedede" stroke-width="2.2"/></svg>
<div class="t" style="left:1581.00px;width:200px;text-align:center;top:1959.29px;font-size:88px;line-height:88px;color:#3478f6;font-weight:400;font-family:'Liberation Serif',serif;font-style:italic;font-weight:700;">W</div>
<svg style="position:absolute;left:1885.0px;top:1954.2px;" width="168" height="132" viewBox="0 0 168 132"><defs><linearGradient id="fg" x1="0" y1="0" x2="0" y2="1"><stop offset="0" stop-color="#8ccbef"/><stop offset="1" stop-color="#a2d8f6"/></linearGradient></defs><path d="M0 10.5 Q0 0 10.5 0 H45.5 Q50 0 53 3.5 L59.5 10.8 Q62.5 14.3 67 14.3 H158 Q168 14.3 168 24.3 V40 H0 Z" fill="#aadcf8"/><path d="M0 36.8 Q0 26.5 10.3 26.5 H157.7 Q168 26.5 168 36.8 V120 Q168 132 156 132 H12 Q0 132 0 120 Z" fill="url(#fg)"/></svg>
<svg style="position:absolute;left:2167.5px;top:1954.2px;" width="168" height="132" viewBox="0 0 168 132"><defs><linearGradient id="fg" x1="0" y1="0" x2="0" y2="1"><stop offset="0" stop-color="#8ccbef"/><stop offset="1" stop-color="#a2d8f6"/></linearGradient></defs><path d="M0 10.5 Q0 0 10.5 0 H45.5 Q50 0 53 3.5 L59.5 10.8 Q62.5 14.3 67 14.3 H158 Q168 14.3 168 24.3 V40 H0 Z" fill="#aadcf8"/><path d="M0 36.8 Q0 26.5 10.3 26.5 H157.7 Q168 26.5 168 36.8 V120 Q168 132 156 132 H12 Q0 132 0 120 Z" fill="url(#fg)"/></svg>
<svg style="position:absolute;left:2492.3px;top:1918.8px;" width="84" height="132" viewBox="0 0 84 132"><defs><clipPath id="cw"><rect x="0" y="0" width="83.6" height="160" rx="5.5"/></clipPath><filter id="bl" x="-10%" y="-10%" width="120%" height="120%"><feGaussianBlur stdDeviation="0.9"/></filter></defs><g clip-path="url(#cw)"><rect x="0" y="0" width="83.6" height="160" fill="#f8f4f1"/><rect x="6.5" y="0.8" width="9" height="0.9" fill="#3d8fe0" opacity="0.8"/><rect x="36" y="0.8" width="3" height="0.9" fill="#e05a78" opacity="0.7"/><rect x="42" y="0.8" width="12" height="0.8" fill="#999" opacity="0.5"/><rect x="56.5" y="0.8" width="7" height="0.8" fill="#999" opacity="0.5"/><rect x="66.7" y="0" width="6" height="2.8" fill="#3d8fe0"/><g clip-path="url(#cph)"><defs><clipPath id="cph"><rect x="5.6" y="7.9" width="72.1" height="27"/></clipPath></defs><rect x="5.6" y="7.9" width="72.1" height="27" fill="#d4bca4"/><g filter="url(#bl)"><rect x="36" y="7.9" width="32" height="14" fill="#b9c9d2"/><rect x="49" y="7.9" width="3" height="14" fill="#e9eef0"/><path d="M5.6 7.9 H22 Q24 14 20 19 Q12 22 5.6 20 Z" fill="#7a5646"/><path d="M10 12 Q14 10 17 14 Q15 18 11 17 Z" fill="#e6c8c8"/><path d="M12 22 Q26 16 40 21 L38 25 Q24 23 13 26 Z" fill="#d9a48a"/><path d="M5.6 24 H30 L26 34.9 H5.6 Z" fill="#cdb99a"/><path d="M24 34.9 L33 25 Q48 23 62 27 L70 34.9 Z" fill="#ece8e2"/><path d="M50 22 Q62 17 70 19 L77.7 21 V34.9 H66 Q62 28 52 26 Z" fill="#b8805e"/><path d="M68 7.9 H77.7 V24 Q72 22 70 16 Z" fill="#2e2622"/><path d="M36 33 L42.5 29" stroke="#26346a" stroke-width="1.2"/><path d="M45 27.5 L52 26.5" stroke="#333" stroke-width="0.8"/></g></g><rect x="6.5" y="35.6" width="70.1" height="130" fill="#fff"/><rect x="9.7" y="37.1" width="27.6" height="0.7" fill="#999" opacity="0.45"/><rect x="58.8" y="36.6" width="3" height="1.4" fill="#777" opacity="0.5"/><rect x="64" y="36.3" width="2" height="2" fill="#4a90d9" opacity="0.8"/><rect x="67" y="36.3" width="2" height="2" fill="#3a5a9a" opacity="0.8"/><rect x="70" y="36.3" width="2" height="2" fill="#3a7a9a" opacity="0.8"/><rect x="73" y="36.3" width="2" height="2" fill="#e0704a" opacity="0.8"/><rect x="21.7" y="40.5" width="6" height="2.2" fill="#5ccf70"/><rect x="27.7" y="40.5" width="8" height="2.2" fill="#3d8fe0"/><rect x="21.7" y="44.9" width="34.8" height="1.9" fill="#333" opacity="0.85"/><rect x="21.7" y="47.4" width="32.5" height="1.9" fill="#333" opacity="0.85"/><rect x="21.7" y="51.3" width="4.5" height="0.6" fill="#999" opacity="0.5"/><rect x="21.7" y="55.4" width="39.3" height="0.75" fill="#888" opacity="0.55"/><rect x="21.7" y="57.4" width="39.3" height="0.75" fill="#888" opacity="0.55"/><rect x="21.7" y="63.4" width="20.6" height="0.75" fill="#3d8fe0" opacity="0.55"/><rect x="21.7" y="66.4" width="22.8" height="0.75" fill="#666" opacity="0.55"/><rect x="21.7" y="68.4" width="21.9" height="0.75" fill="#666" opacity="0.55"/><rect x="21.7" y="70.4" width="17.9" height="0.75" fill="#666" opacity="0.55"/><rect x="21.7" y="73.5" width="39.8" height="0.75" fill="#888" opacity="0.55"/><rect x="21.7" y="75.5" width="39.8" height="0.75" fill="#777" opacity="0.55"/><rect x="21.7" y="77.5" width="5" height="0.75" fill="#888" opacity="0.55"/><rect x="21.7" y="82.4" width="27.7" height="0.75" fill="#3d8fe0" opacity="0.55"/><rect x="21.7" y="85.4" width="39.8" height="0.75" fill="#777" opacity="0.55"/><rect x="21.7" y="87.4" width="7" height="0.75" fill="#888" opacity="0.55"/><rect x="21.7" y="90.5" width="36" height="0.75" fill="#888" opacity="0.55"/><rect x="21.7" y="92.5" width="34" height="0.75" fill="#888" opacity="0.55"/><rect x="21.7" y="94.5" width="32" height="0.75" fill="#888" opacity="0.55"/><rect x="21.7" y="97.5" width="5" height="0.75" fill="#888" opacity="0.55"/><rect x="21.7" y="99.5" width="34.5" height="0.75" fill="#888" opacity="0.55"/><rect x="21.7" y="101.5" width="35.5" height="0.75" fill="#888" opacity="0.55"/><rect x="21.7" y="103.5" width="36" height="0.75" fill="#888" opacity="0.55"/><rect x="21.7" y="106.5" width="5" height="0.75" fill="#888" opacity="0.55"/><rect x="21.7" y="108.5" width="20" height="0.75" fill="#888" opacity="0.55"/><rect x="21.7" y="111.5" width="33.5" height="0.75" fill="#888" opacity="0.55"/><rect x="21.7" y="113.5" width="21" height="0.75" fill="#888" opacity="0.55"/><rect x="21.7" y="116.5" width="27.5" height="0.75" fill="#888" opacity="0.55"/><rect x="21.7" y="118.5" width="36.5" height="0.75" fill="#888" opacity="0.55"/><rect x="21.7" y="121.5" width="35" height="0.75" fill="#888" opacity="0.55"/><rect x="21.7" y="123.5" width="35.5" height="0.75" fill="#888" opacity="0.55"/><rect x="21.7" y="125.5" width="34.5" height="0.75" fill="#888" opacity="0.55"/><rect x="22" y="89.5" width="0.5" height="37" fill="#ccc"/></g><rect x="0.65" y="0.65" width="82.3" height="170" rx="5.5" fill="none" stroke="#b0b0b0" stroke-width="1.3"/></svg>
<div style="position:absolute;left:1021px;top:2022px;width:690px;height:11px;border-radius:5.5px;background:#000;"></div>
</body></html>
